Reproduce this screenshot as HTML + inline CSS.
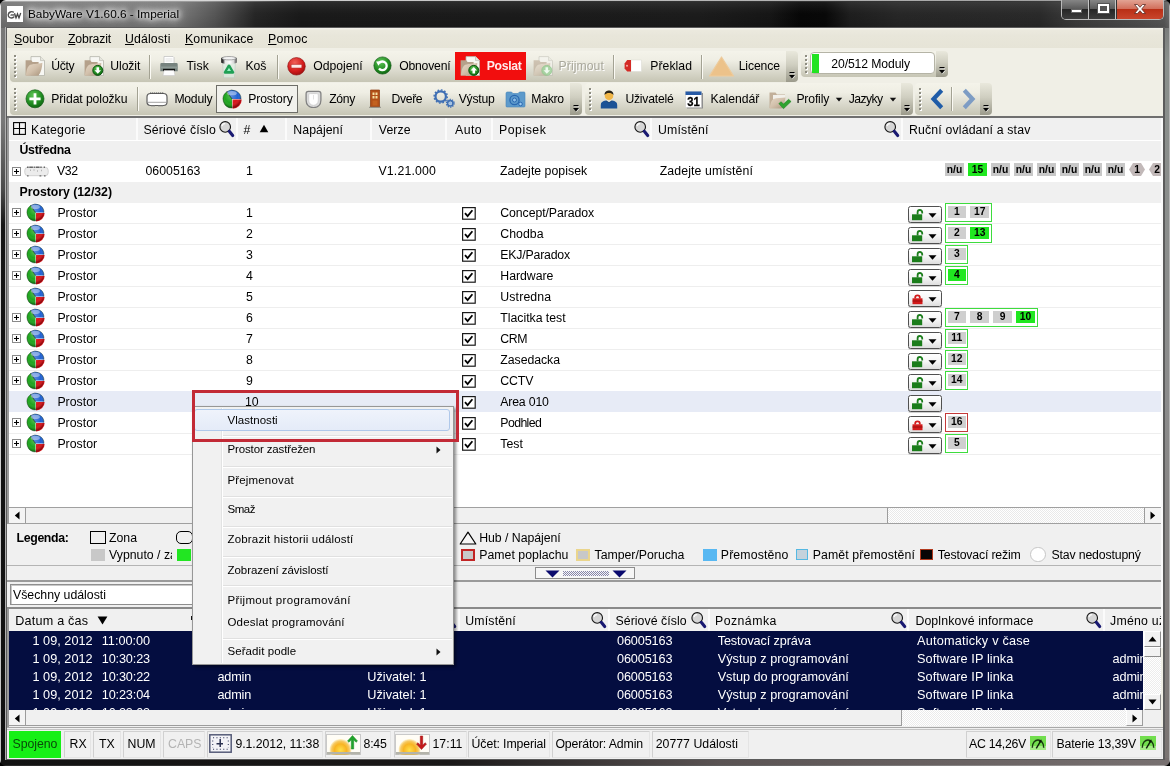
<!DOCTYPE html>
<html lang="cs">
<head>
<meta charset="utf-8">
<title>BabyWare V1.60.6 - Imperial</title>
<style>
*{box-sizing:border-box;margin:0;padding:0}
html,body{width:1170px;height:766px;overflow:hidden}
body{position:relative;background:#1c1c1c;font-family:"Liberation Sans",Arial,sans-serif;font-size:13px;color:#000;line-height:1}
.a{position:absolute;white-space:nowrap}
.t{position:absolute;white-space:nowrap;line-height:16px;height:16px}
.b{font-weight:bold}
u{text-decoration:underline}
</style>
</head>
<body>
<div class="a" style="left:0;top:0;width:1170px;height:766px;will-change:transform">
<!-- window frame -->
<div class="a" style="left:0;top:0;width:1170px;height:766px;background:#141414"></div>
<!-- left frame strip: gray near top fading to black -->
<div class="a" style="left:0;top:0;width:8px;height:766px;background:linear-gradient(180deg,#777 0,#787878 120px,#4a4a4a 190px,#151515 225px,#111 100%)"></div>
<!-- right frame strip -->
<div class="a" style="left:1162px;top:0;width:8px;height:766px;background:linear-gradient(180deg,#6c6c6c 0,#8a8f8c 60px,#8c8c8c 400px,#7a7472 100%)"></div>
<!-- bottom frame strip -->
<div class="a" style="left:0;top:758px;width:1170px;height:8px;background:linear-gradient(90deg,#121212 0,#1a1818 450px,#5a5353 720px,#777070 1170px)"></div>
<!-- title bar -->
<div class="a" style="left:0;top:0;width:1170px;height:28px;background:linear-gradient(90deg,#747474 0,#7c7c7c 40px,#7b7b7b 175px,#565656 215px,#262626 255px,#1a1a1a 300px,#1c1c1c 700px,#161616 770px,#070707 800px,#080808 825px,#1e1e1e 850px,#272727 900px,#2a2a2a 1040px,#3c3c3c 1075px,#585858 1164px,#6c6c6c 1170px)"></div>
<div class="a" style="left:0;top:0;width:1170px;height:28px;background:linear-gradient(180deg,rgba(255,255,255,.22) 0,rgba(255,255,255,.08) 2px,rgba(255,255,255,.03) 8px,rgba(0,0,0,0) 14px,rgba(0,0,0,.12) 28px)"></div>
<div class="a" style="left:0;top:0;width:1170px;height:1px;background:linear-gradient(90deg,#e8e8e8 0,#d0d0d0 300px,#9a9a9a 1170px)"></div>
<div class="a" style="left:0;top:1px;width:1170px;height:1px;background:linear-gradient(90deg,#a8a8a8 0,#9a9a9a 200px,#333 300px,#333 1000px,#555 1170px)"></div>
<div class="a" style="left:0;top:0;width:1px;height:766px;background:linear-gradient(180deg,#e8e8e8 0,#dcdcdc 200px,#c4c4c4 100%)"></div>
<div class="a" style="left:1169px;top:0;width:1px;height:766px;background:#b4b4b4"></div>
<div class="a" style="left:0;top:765px;width:1170px;height:1px;background:linear-gradient(90deg,#2a2a2a 0,#3a3a3a 500px,#a8a4a4 1170px)"></div>
<!-- corners -->
<svg class="a" style="left:0;top:0" width="6" height="6" viewBox="0 0 6 6"><path d="M0 0h6A6 6 0 0 0 0 6z" fill="#000"/></svg>
<svg class="a" style="left:1164px;top:0" width="6" height="6" viewBox="0 0 6 6"><path d="M6 0H0A6 6 0 0 1 6 6z" fill="#000"/></svg>
<svg class="a" style="left:0;top:760px" width="6" height="6" viewBox="0 0 6 6"><path d="M0 6h6A6 6 0 0 1 0 0z" fill="#000"/></svg>
<svg class="a" style="left:1164px;top:760px" width="6" height="6" viewBox="0 0 6 6"><path d="M6 6H0A6 6 0 0 0 6 0z" fill="#000"/></svg>
<!-- inner client border -->
<div class="a" style="left:5px;top:27px;width:1160px;height:733px;background:#5b5b5b;border-left:1px solid #b0b0b0"></div>
<div class="a" style="left:7px;top:28px;width:1156px;height:731px;background:#f0efe6"></div>
<!-- app icon -->
<div class="a" style="left:7px;top:6px;width:16px;height:16px;background:#fff"></div>
<svg class="a" style="left:7px;top:6.500px" width="16" height="16" viewBox="0 0 16 16"><path d="M6.800 5.300C4.600 3.900 1.400 5 1.200 7.900c-.2 2.700 2.900 3.800 5.400 2.500V8H4" fill="none" stroke="#505050" stroke-width="1.400"/><path d="M3 8.200h3.600v2" fill="none" stroke="#9a9a9a" stroke-width="1"/><path d="M7.500 6.300l1.500 4.600 1.500-4 1.500 4 1.700-4.900" fill="none" stroke="#444" stroke-width="1.300"/></svg>
<!-- title -->
<div class="a" style="left:28px;top:6px;font-size:11.800px;line-height:16px;color:#000;text-shadow:0 0 5px #fff,0 0 7px #fff,0 0 9px rgba(255,255,255,.95),0 0 12px rgba(255,255,255,.8)">BabyWare V1.60.6 - Imperial</div>
<!-- caption buttons -->
<div class="a" style="left:1061px;top:0;width:103px;height:20px;border:1px solid #b9b9b9;border-top:none;border-radius:0 0 5px 5px;background:#333;overflow:hidden">
 <div class="a" style="left:0;top:0;width:27px;height:19px;background:linear-gradient(180deg,#858585 0,#5c5c5c 45%,#262626 50%,#3e3e3e 100%);border-right:1px solid #c5c5c5"></div>
 <div class="a" style="left:28px;top:0;width:26px;height:19px;background:linear-gradient(180deg,#858585 0,#5c5c5c 45%,#262626 50%,#3e3e3e 100%);border-right:1px solid #c5c5c5"></div>
 <div class="a" style="left:55px;top:0;width:46px;height:19px;background:linear-gradient(180deg,#e2a393 0,#d2705c 45%,#b92f16 50%,#c9452c 100%)"></div>
 <div class="a" style="left:9px;top:9px;width:11px;height:4px;background:#fff;border:1px solid #666"></div>
 <div class="a" style="left:36px;top:4px;width:11px;height:9px;border:2px solid #fff;border-top-width:2.500px;outline:1px solid #555;background:#555"></div>
 <svg class="a" style="left:71px;top:3px" width="14" height="12" viewBox="0 0 14 12"><path d="M1.500 1.500h3L7 4.300 9.500 1.500h3L8.700 6l3.800 4.500h-3L7 7.700 4.500 10.500h-3L5.300 6z" fill="#fff" stroke="#5a2a22" stroke-width=".8"/></svg>
</div>
<!-- menu + toolbars -->
<div class="a" style="left:7px;top:28px;width:1156px;height:20px;background:linear-gradient(180deg,#f4f3ec 0,#ebe9de 12%,#e8e6da 40%,#e6e4d7 100%);"></div>
<div class="t" style="left:14px;top:30.5px;font-size:12.3px;letter-spacing:0.023px;"><u>S</u>oubor</div>
<div class="t" style="left:68px;top:30.5px;font-size:12.3px;letter-spacing:-0.179px;"><u>Z</u>obrazit</div>
<div class="t" style="left:125px;top:30.5px;font-size:12.3px;letter-spacing:0.133px;"><u>U</u>dálosti</div>
<div class="t" style="left:185px;top:30.5px;font-size:12.3px;letter-spacing:0.061px;"><u>K</u>omunikace</div>
<div class="t" style="left:268px;top:30.5px;font-size:12.3px;letter-spacing:0.284px;"><u>P</u>omoc</div>
<div class="a" style="left:10px;top:51px;width:778px;height:31px;background:linear-gradient(180deg,#f4f3ea 0,#efeee4 30%,#dddcd0 60%,#c6c5b4 100%);border-radius:4px 0 0 4px;"></div>
<div class="a" style="left:786px;top:51px;width:12px;height:31px;background:linear-gradient(180deg,#e9e8dc 0,#cfcec0 45%,#9b9a8b 100%);border-radius:0 4px 4px 0;"></div>
<svg class="a" style="left:788px;top:71px" width="8" height="9" viewBox="0 0 8 9"><path d="M2.100 2.600h5" stroke="#fff" stroke-width="1" opacity=".85"/><path d="M1.500 1.600h5" stroke="#000" stroke-width="1.200"/><path d="M1.600 4.600h6L4.600 8.100z" fill="#fff" opacity=".85"/><path d="M1 4h6L4 7.500z" fill="#000"/></svg>
<div class="a" style="left:15px;top:56px;width:2px;height:22px;background:repeating-linear-gradient(180deg,#fff 0,#fff 2px,transparent 2px,transparent 4px)"></div>
<div class="a" style="left:14px;top:55px;width:2px;height:22px;background:repeating-linear-gradient(180deg,#8e8d82 0,#8e8d82 2px,transparent 2px,transparent 4px)"></div>
<div class="a" style="left:801px;top:51px;width:137px;height:26px;background:linear-gradient(180deg,#f4f3ea 0,#efeee4 30%,#dddcd0 60%,#c6c5b4 100%);border-radius:4px 0 0 4px;"></div>
<div class="a" style="left:936px;top:51px;width:12px;height:26px;background:linear-gradient(180deg,#e9e8dc 0,#cfcec0 45%,#9b9a8b 100%);border-radius:0 4px 4px 0;"></div>
<svg class="a" style="left:938px;top:66px" width="8" height="9" viewBox="0 0 8 9"><path d="M2.100 2.600h5" stroke="#fff" stroke-width="1" opacity=".85"/><path d="M1.500 1.600h5" stroke="#000" stroke-width="1.200"/><path d="M1.600 4.600h6L4.600 8.100z" fill="#fff" opacity=".85"/><path d="M1 4h6L4 7.500z" fill="#000"/></svg>
<div class="a" style="left:806px;top:56px;width:2px;height:18px;background:repeating-linear-gradient(180deg,#fff 0,#fff 2px,transparent 2px,transparent 4px)"></div>
<div class="a" style="left:805px;top:55px;width:2px;height:18px;background:repeating-linear-gradient(180deg,#8e8d82 0,#8e8d82 2px,transparent 2px,transparent 4px)"></div>
<div class="a" style="left:10px;top:83px;width:562px;height:32px;background:linear-gradient(180deg,#f4f3ea 0,#efeee4 30%,#dddcd0 60%,#c6c5b4 100%);border-radius:4px 0 0 4px;"></div>
<div class="a" style="left:570px;top:83px;width:12px;height:32px;background:linear-gradient(180deg,#e9e8dc 0,#cfcec0 45%,#9b9a8b 100%);border-radius:0 4px 4px 0;"></div>
<svg class="a" style="left:572px;top:104px" width="8" height="9" viewBox="0 0 8 9"><path d="M2.100 2.600h5" stroke="#fff" stroke-width="1" opacity=".85"/><path d="M1.500 1.600h5" stroke="#000" stroke-width="1.200"/><path d="M1.600 4.600h6L4.600 8.100z" fill="#fff" opacity=".85"/><path d="M1 4h6L4 7.500z" fill="#000"/></svg>
<div class="a" style="left:15px;top:89px;width:2px;height:22px;background:repeating-linear-gradient(180deg,#fff 0,#fff 2px,transparent 2px,transparent 4px)"></div>
<div class="a" style="left:14px;top:88px;width:2px;height:22px;background:repeating-linear-gradient(180deg,#8e8d82 0,#8e8d82 2px,transparent 2px,transparent 4px)"></div>
<div class="a" style="left:585px;top:83px;width:318px;height:32px;background:linear-gradient(180deg,#f4f3ea 0,#efeee4 30%,#dddcd0 60%,#c6c5b4 100%);border-radius:4px 0 0 4px;"></div>
<div class="a" style="left:901px;top:83px;width:12px;height:32px;background:linear-gradient(180deg,#e9e8dc 0,#cfcec0 45%,#9b9a8b 100%);border-radius:0 4px 4px 0;"></div>
<svg class="a" style="left:903px;top:104px" width="8" height="9" viewBox="0 0 8 9"><path d="M2.100 2.600h5" stroke="#fff" stroke-width="1" opacity=".85"/><path d="M1.500 1.600h5" stroke="#000" stroke-width="1.200"/><path d="M1.600 4.600h6L4.600 8.100z" fill="#fff" opacity=".85"/><path d="M1 4h6L4 7.500z" fill="#000"/></svg>
<div class="a" style="left:590px;top:89px;width:2px;height:22px;background:repeating-linear-gradient(180deg,#fff 0,#fff 2px,transparent 2px,transparent 4px)"></div>
<div class="a" style="left:589px;top:88px;width:2px;height:22px;background:repeating-linear-gradient(180deg,#8e8d82 0,#8e8d82 2px,transparent 2px,transparent 4px)"></div>
<div class="a" style="left:915px;top:83px;width:67px;height:32px;background:linear-gradient(180deg,#f4f3ea 0,#efeee4 30%,#dddcd0 60%,#c6c5b4 100%);border-radius:4px 0 0 4px;"></div>
<div class="a" style="left:980px;top:83px;width:12px;height:32px;background:linear-gradient(180deg,#e9e8dc 0,#cfcec0 45%,#9b9a8b 100%);border-radius:0 4px 4px 0;"></div>
<svg class="a" style="left:982px;top:104px" width="8" height="9" viewBox="0 0 8 9"><path d="M2.100 2.600h5" stroke="#fff" stroke-width="1" opacity=".85"/><path d="M1.500 1.600h5" stroke="#000" stroke-width="1.200"/><path d="M1.600 4.600h6L4.600 8.100z" fill="#fff" opacity=".85"/><path d="M1 4h6L4 7.500z" fill="#000"/></svg>
<div class="a" style="left:920px;top:89px;width:2px;height:22px;background:repeating-linear-gradient(180deg,#fff 0,#fff 2px,transparent 2px,transparent 4px)"></div>
<div class="a" style="left:919px;top:88px;width:2px;height:22px;background:repeating-linear-gradient(180deg,#8e8d82 0,#8e8d82 2px,transparent 2px,transparent 4px)"></div>
<div class="t" style="left:51.3px;top:57.5px;font-size:12.2px;letter-spacing:-0.325px;">Účty</div>
<div class="t" style="left:110.3px;top:57.5px;font-size:12.2px;letter-spacing:-0.084px;">Uložit</div>
<div class="t" style="left:186.4px;top:57.5px;font-size:12.2px;letter-spacing:0.172px;">Tisk</div>
<div class="t" style="left:245.4px;top:57.5px;font-size:12.2px;letter-spacing:-0.074px;">Koš</div>
<div class="t" style="left:313.3px;top:57.5px;font-size:12.2px;letter-spacing:-0.002px;">Odpojení</div>
<div class="t" style="left:399.2px;top:57.5px;font-size:12.2px;letter-spacing:-0.201px;">Obnovení</div>
<div class="t" style="left:559.5px;top:58.5px;font-size:12.2px;color:#fff;letter-spacing:0.095px;">Přijmout</div>
<div class="t" style="left:558.5px;top:57.5px;font-size:12.2px;color:#a9a89c;letter-spacing:0.095px;">Přijmout</div>
<div class="t" style="left:650.3px;top:57.5px;font-size:12.2px;letter-spacing:0.048px;">Překlad</div>
<div class="t" style="left:738.7px;top:57.5px;font-size:12.2px;letter-spacing:-0.107px;">Licence</div>
<div class="a" style="left:455px;top:52px;width:71px;height:28px;background:#f20e0e;"></div>
<div class="t" style="left:486.7px;top:57.5px;font-size:12.2px;color:#ffecec;font-weight:bold;letter-spacing:-0.269px;">Poslat</div>
<div class="a" style="left:149px;top:55px;width:1px;height:24px;background:#a3a293;"></div>
<div class="a" style="left:150px;top:55px;width:1px;height:24px;background:#fbfaf4;"></div>
<div class="a" style="left:277px;top:55px;width:1px;height:24px;background:#a3a293;"></div>
<div class="a" style="left:278px;top:55px;width:1px;height:24px;background:#fbfaf4;"></div>
<div class="a" style="left:613px;top:55px;width:1px;height:24px;background:#a3a293;"></div>
<div class="a" style="left:614px;top:55px;width:1px;height:24px;background:#fbfaf4;"></div>
<div class="a" style="left:701px;top:55px;width:1px;height:24px;background:#a3a293;"></div>
<div class="a" style="left:702px;top:55px;width:1px;height:24px;background:#fbfaf4;"></div>
<div class="a" style="left:810px;top:52px;width:125px;height:22px;background:#fff;border:1px solid #b5b4a6;border-radius:4px;"></div>
<div class="a" style="left:812px;top:54px;width:7px;height:19px;background:#22e322;"></div>
<div class="t" style="left:831.3px;top:56px;font-size:12.2px;letter-spacing:-0.103px;">20/512 Moduly</div>
<div class="a" style="left:216px;top:85px;width:82px;height:28px;background:#f1f1ec;border:1px solid #6e6e68;"></div>
<div class="t" style="left:51.3px;top:91px;font-size:12.2px;letter-spacing:-0.086px;">Přidat položku</div>
<div class="t" style="left:174.4px;top:91px;font-size:12.2px;letter-spacing:-0.238px;">Moduly</div>
<div class="t" style="left:248.2px;top:91px;font-size:12.2px;letter-spacing:-0.103px;">Prostory</div>
<div class="t" style="left:329.2px;top:91px;font-size:12.2px;letter-spacing:-0.306px;">Zóny</div>
<div class="t" style="left:391.5px;top:91px;font-size:12.2px;letter-spacing:-0.349px;">Dveře</div>
<div class="t" style="left:458.7px;top:91px;font-size:12.2px;letter-spacing:-0.233px;">Výstup</div>
<div class="t" style="left:531.3px;top:91px;font-size:12.2px;letter-spacing:-0.279px;">Makro</div>
<div class="t" style="left:625.4px;top:91px;font-size:12.2px;letter-spacing:-0.220px;">Uživatelé</div>
<div class="t" style="left:710.5px;top:91px;font-size:12.2px;letter-spacing:0.020px;">Kalendář</div>
<div class="t" style="left:796.4px;top:91px;font-size:12.2px;letter-spacing:-0.157px;">Profily</div>
<div class="t" style="left:848.7px;top:91px;font-size:12.2px;letter-spacing:-0.564px;">Jazyky</div>
<div class="a" style="left:137px;top:87px;width:1px;height:24px;background:#a3a293;"></div>
<div class="a" style="left:138px;top:87px;width:1px;height:24px;background:#fbfaf4;"></div>
<!-- toolbar icons -->
<svg class="a" width="0" height="0" style="left:0;top:0"><defs>
<linearGradient id="gFold" x1="0" y1="0" x2="1" y2="1"><stop offset="0" stop-color="#e6d8c6"/><stop offset=".5" stop-color="#d2c0ab"/><stop offset="1" stop-color="#a8937b"/></linearGradient>
<radialGradient id="gGreen" cx=".4" cy=".3" r=".8"><stop offset="0" stop-color="#5fc457"/><stop offset=".6" stop-color="#1f8a1f"/><stop offset="1" stop-color="#0d5a10"/></radialGradient>
<radialGradient id="gRed" cx=".4" cy=".3" r=".8"><stop offset="0" stop-color="#f0605a"/><stop offset=".6" stop-color="#d31a1a"/><stop offset="1" stop-color="#8e0c0c"/></radialGradient>
<radialGradient id="gBlue" cx=".5" cy=".2" r=".9"><stop offset="0" stop-color="#7fb4f0"/><stop offset=".6" stop-color="#2a63c0"/><stop offset="1" stop-color="#173f8a"/></radialGradient>
<radialGradient id="gGrn2" cx=".3" cy=".3" r=".9"><stop offset="0" stop-color="#6cd060"/><stop offset=".6" stop-color="#249a22"/><stop offset="1" stop-color="#126a14"/></radialGradient>
<radialGradient id="gRed2" cx=".5" cy=".3" r=".9"><stop offset="0" stop-color="#f06a5a"/><stop offset=".7" stop-color="#d02018"/><stop offset="1" stop-color="#9a1410"/></radialGradient>
<radialGradient id="gSph" cx=".45" cy=".35" r=".65"><stop offset="0" stop-color="#fff" stop-opacity=".25"/><stop offset=".55" stop-color="#fff" stop-opacity="0"/><stop offset=".85" stop-color="#000" stop-opacity=".18"/><stop offset="1" stop-color="#000" stop-opacity=".5"/></radialGradient>
</defs></svg>
<svg class="a" style="left:25px;top:56px;" width="20" height="20" viewBox="0 0 20 20"><g opacity="1"><path d="M6 .6h9.500l4 4v14.900H6z" fill="#f7f7f3" stroke="#b4b4aa" stroke-width=".8"/><path d="M15.500 .6v4h4" fill="#e6e6de" stroke="#b4b4aa" stroke-width=".6"/><path d="M.6 4.200h5.600l1.400 1.800h6v13.500H.6z" fill="#b5a18b"/><path d="M.8 19.500C1.400 15 2 11.200 4.200 9.400c2.700-2.100 8.600-1 13.200-2.700-.3 5.200-1.400 9.700-4 12.800z" fill="url(#gFold)"/></g></svg>
<svg class="a" style="left:84px;top:56px;" width="20" height="20" viewBox="0 0 20 20"><g opacity="1"><path d="M6 .6h9.500l4 4v14.900H6z" fill="#f7f7f3" stroke="#b4b4aa" stroke-width=".8"/><path d="M15.500 .6v4h4" fill="#e6e6de" stroke="#b4b4aa" stroke-width=".6"/><path d="M.6 4.200h5.600l1.400 1.800h6v13.500H.6z" fill="#b5a18b"/><path d="M.8 19.500C1.400 15 2 11.200 4.200 9.400c2.700-2.100 8.600-1 13.200-2.700-.3 5.200-1.400 9.700-4 12.800z" fill="url(#gFold)"/></g><circle cx="13.800" cy="14.400" r="5" fill="url(#gGreen)" stroke="#0c5210" stroke-width="1"/><path d="M12.500 11.300h2.600v3h2l-3.300 3.500-3.300-3.500h2z" fill="#fff"/></svg>
<svg class="a" style="left:160px;top:56px;" width="18" height="20" viewBox="0 0 18 20"><path d="M4 .5h9l1 1v6H4z" fill="#fff" stroke="#bdbdbd" stroke-width=".7"/><path d="M5.500 3h7M5.500 5h7" stroke="#d5d5d5" stroke-width=".7"/><path d="M1.500 7h15a1.200 1.200 0 0 1 1.200 1.200v7H.3v-7A1.200 1.200 0 0 1 1.500 7z" fill="#77837f"/><path d="M.3 10.500h17.400v2H.3z" fill="#8f9b97"/><path d="M3 12.800h12v2.400H3z" fill="#111"/><path d="M4 14.500h10l1 5H3z" fill="#fdfdfd" stroke="#c8c8c8" stroke-width=".6"/></svg>
<svg class="a" style="left:220px;top:55px;" width="18" height="24" viewBox="0 0 18 24"><defs><linearGradient id="gRim" x1="0" x2="1"><stop offset="0" stop-color="#111"/><stop offset=".13" stop-color="#444"/><stop offset=".25" stop-color="#e6e6e6"/><stop offset=".55" stop-color="#fdfdfd"/><stop offset=".8" stop-color="#d8d8d8"/><stop offset=".93" stop-color="#777"/><stop offset="1" stop-color="#555"/></linearGradient></defs><path d="M2.600 7.500h12.800l-1 15.200H3.600z" fill="#dff0e6" fill-opacity=".65" stroke="#b9c6be" stroke-opacity=".7" stroke-width=".7"/><path d="M1.200 3.200C1.200 .8 16.800 .8 16.800 3.200v4C16.800 9.400 1.200 9.400 1.200 7.200z" fill="url(#gRim)"/><ellipse cx="9" cy="3.200" rx="7" ry="1.700" fill="#f2f2f2" stroke="#8a8a8a" stroke-width=".7"/><path d="M9 10.800l3.900 6.600H5.100z" fill="#b6f0cf" stroke="#1fa055" stroke-width="2.700" stroke-linejoin="round"/><path d="M9 12.800l1.900 3.300H7.100z" fill="#9af0c4"/></svg>
<svg class="a" style="left:287px;top:57px;" width="19" height="19" viewBox="0 0 19 19"><circle cx="9.500" cy="9.300" r="8.800" fill="url(#gRed)" stroke="#8a1010" stroke-width=".6"/><rect x="4.200" y="7.400" width="10.600" height="3.600" rx=".8" fill="#fde8e8" stroke="#a82020" stroke-width=".5"/></svg>
<svg class="a" style="left:373px;top:56px;" width="19" height="19" viewBox="0 0 19 19"><circle cx="9.500" cy="9.500" r="8.600" fill="url(#gGreen)" stroke="#0f5a12" stroke-width=".7"/><path d="M6 12.500a4.300 4.300 0 1 0 .2-5.600" fill="none" stroke="#fff" stroke-width="2.300"/><path d="M3.300 5.200l5.200 .3-3.400 4.200z" fill="#fff" transform="rotate(-8 6 7)"/></svg>
<svg class="a" style="left:460px;top:55.5px;" width="20" height="20" viewBox="0 0 20 20"><g opacity="1"><path d="M6 .6h9.500l4 4v14.900H6z" fill="#f7f7f3" stroke="#b4b4aa" stroke-width=".8"/><path d="M15.500 .6v4h4" fill="#e6e6de" stroke="#b4b4aa" stroke-width=".6"/><path d="M.6 4.200h5.600l1.400 1.800h6v13.500H.6z" fill="#b5a18b"/><path d="M.8 19.500C1.400 15 2 11.200 4.200 9.400c2.700-2.100 8.600-1 13.200-2.700-.3 5.200-1.400 9.700-4 12.800z" fill="url(#gFold)"/></g><circle cx="13.800" cy="14.400" r="5" fill="url(#gGreen)" stroke="#0c5210" stroke-width="1"/><path d="M12.500 17.600h2.600v-3h2l-3.300-3.500-3.300 3.500h2z" fill="#fff"/></svg>
<svg class="a" style="left:533px;top:56px;" width="20" height="20" viewBox="0 0 20 20"><g opacity="0.55"><path d="M6 .6h9.500l4 4v14.900H6z" fill="#f7f7f3" stroke="#b4b4aa" stroke-width=".8"/><path d="M15.500 .6v4h4" fill="#e6e6de" stroke="#b4b4aa" stroke-width=".6"/><path d="M.6 4.200h5.600l1.400 1.800h6v13.500H.6z" fill="#b5a18b"/><path d="M.8 19.500C1.400 15 2 11.200 4.200 9.400c2.700-2.100 8.600-1 13.200-2.700-.3 5.200-1.400 9.700-4 12.800z" fill="url(#gFold)"/></g><circle cx="13.800" cy="14.400" r="5" fill="#a4d4a0" stroke="#8fc48c" stroke-width=".8" opacity=".9"/><path d="M12.500 11.300h2.600v3h2l-3.300 3.500-3.300-3.500h2z" fill="#eefaee"/></svg>
<svg class="a" style="left:624px;top:59px;" width="19" height="14" viewBox="0 0 19 14"><path d="M7 1h10.500v11.500H7z" fill="#fff" stroke="#d8d8d0" stroke-width=".5"/><path d="M7 1v11.500H3.200L.6 9.500v-5L3.200 1z" fill="#d42a25"/><circle cx="3" cy="6.800" r="1" fill="#f4b0a8"/></svg>
<svg class="a" style="left:708px;top:55px;" width="27" height="22" viewBox="0 0 27 22"><path d="M13.500 2L25.500 21H1.500z" fill="#ecc28a" stroke="#edcb9c" stroke-width="1.200" stroke-linejoin="round"/></svg>
<svg class="a" style="left:25px;top:89px;" width="20" height="20" viewBox="0 0 20 20"><circle cx="10" cy="9.800" r="9" fill="url(#gGreen)" stroke="#0f5a12" stroke-width=".7"/><path d="M8.600 4.200h2.800v4.200h4.200v2.800h-4.200v4.200H8.600v-4.200H4.400V8.400h4.200z" fill="#fff"/></svg>
<svg class="a" style="left:146px;top:91px;" width="22" height="16" viewBox="0 0 22 16"><rect x="1" y="2.500" width="20" height="12" rx="3.500" fill="#fff" stroke="#606060" stroke-width="1.200"/><path d="M4 2.200h14" stroke="#555" stroke-width="1.600" stroke-dasharray="1.300 .7"/><path d="M2 11.300h18" stroke="#8a8a8a" stroke-width=".8"/><path d="M5 14.800h4M12 14.800h5" stroke="#777" stroke-width="1"/></svg>
<svg class="a" style="left:222px;top:89px;" width="21.2" height="21.2" viewBox="0 0 20 20"><path d="M9.500 9.500L4.620 2.540A8.500 8.500 0 0 0 9.500 18z" fill="#1fa51f"/><path d="M9.500 9.500L4.620 2.540A8.500 8.500 0 0 1 18 9.500z" fill="#2263d2"/><path d="M10 10h8.600A8.500 8.500 0 0 1 10 18.600z" fill="#d8141a"/><circle cx="9.500" cy="9.500" r="8.500" fill="url(#gSph)"/><path d="M9.500 9.500L4.620 2.540A8.500 8.500 0 0 0 9.500 18M9.500 9.500L4.620 2.540A8.500 8.500 0 0 1 18 9.500" fill="none" stroke="#0c2a10" stroke-width=".7" stroke-opacity=".55"/><ellipse cx="9.300" cy="3.900" rx="4.600" ry="2.100" fill="#fff" fill-opacity=".42"/></svg>
<svg class="a" style="left:304.5px;top:89.5px;" width="17" height="18.5" viewBox="0 0 17 18.500"><path d="M3.300 1.300h10.400c1.500 0 2.200 1 2.200 2.500v6.400c0 4.500-3 7.400-7.400 7.400S1.100 14.700 1.100 10.200V3.800c0-1.500 .7-2.500 2.200-2.500z" fill="#dcdcdc" stroke="#828282" stroke-width="1.300"/><path d="M5.300 3.600h6.400c1 0 1.600 .6 1.600 1.600v4.900c0 3.300-2 5.200-4.800 5.200s-4.800-1.900-4.800-5.200V5.200c0-1 .6-1.600 1.600-1.600z" fill="#fefefe" stroke="#c8c8c8" stroke-width=".7"/><path d="M8.500 5v4.500" stroke="#e2e2e2" stroke-width="1"/></svg>
<svg class="a" style="left:369px;top:89px;" width="12" height="20" viewBox="0 0 12 20"><path d="M1.500 1h9v17h-9z" fill="#b24f16" stroke="#8a3a0c" stroke-width=".7"/><path d="M3.500 3.500h2v2.500h-2zM6.500 3.500h2v2.500h-2zM3.500 7h2v2.500h-2zM6.500 7h2v2.500h-2z" fill="#f6dfa0"/><path d="M3.500 11.500h5v5h-5z" fill="#c2611f"/><path d="M0 18.300h12" stroke="#8f8f88" stroke-width="1"/></svg>
<svg class="a" style="left:433px;top:89px;" width="24" height="20" viewBox="0 0 24 20"><circle cx="7.700" cy="7.500" r="5.200" fill="none" stroke="#3f6fb4" stroke-width="2.200"/><circle cx="7.700" cy="7.500" r="6.600" fill="none" stroke="#3f6fb4" stroke-width="1.400" stroke-dasharray="1.700 1.750"/><circle cx="17.300" cy="14.300" r="2.700" fill="none" stroke="#3f6fb4" stroke-width="1.700"/><circle cx="17.300" cy="14.300" r="3.900" fill="none" stroke="#3f6fb4" stroke-width="1.200" stroke-dasharray="1.300 1.150"/><circle cx="17.300" cy="14.300" r="1.500" fill="#9cc0ea"/></svg>
<svg class="a" style="left:505px;top:90px;" width="21" height="18" viewBox="0 0 21 18"><path d="M1 3.500c0-1 .5-1.500 1.500-1.500h4l1.500 1.500H13l1.500-1.500H19c.8 0 1 .5 1 1.500v12.500c0 .8-.4 1-1 1H2c-.7 0-1-.3-1-1z" fill="#5d9acb" stroke="#4684b8" stroke-width=".6"/><circle cx="9.500" cy="10" r="4.600" fill="none" stroke="#2a68b0" stroke-width="1.300"/><circle cx="9.500" cy="10" r="2" fill="#8fc0ea" stroke="#2a68b0" stroke-width="1"/><circle cx="15.500" cy="14" r="1.800" fill="#9ccaf0" stroke="#2a68b0" stroke-width="1"/></svg>
<svg class="a" style="left:600px;top:90px;" width="18" height="19" viewBox="0 0 18 19"><circle cx="9" cy="5.700" r="4.300" fill="#f0b648"/><path d="M4.500 5C4.500 1.600 7 .5 9 .5s4.500 1.100 4.500 4.500c-1.500-1.400-2.600-2-4.500-2s-3 .6-4.500 2z" fill="#2a2418"/><path d="M.8 18.500v-3.600c0-2.600 2-3.700 4.900-4.300l3.300 2 3.300-2c2.900 .6 4.900 1.700 4.900 4.300v3.600z" fill="#1b5296"/><path d="M6 10.800l3 1.900 3-1.900" fill="none" stroke="#0e3a70" stroke-width=".8"/></svg>
<svg class="a" style="left:685px;top:91px;" width="19" height="18" viewBox="0 0 19 18"><path d="M2 2h16v15.500H2z" fill="#8e8e8e"/><path d="M.5 .5h16v16H.5z" fill="#fff" stroke="#c0c0c0" stroke-width=".5"/><path d="M.5 .5h16V4H.5z" fill="#275aa5"/><text x="8.500" y="15.300" font-family="Liberation Sans,sans-serif" font-weight="bold" font-size="13.500" text-anchor="middle" fill="#000" stroke="#000" stroke-width=".3" textLength="12.500" lengthAdjust="spacingAndGlyphs">31</text></svg>
<svg class="a" style="left:769px;top:90px;" width="23" height="20" viewBox="0 0 23 20"><path d="M.5 2.500h6l1.500 2h8v13.500H.5z" fill="#c2b09a"/><path d="M4 5h12v12H4z" fill="#f2f0ea"/><path d="M.5 18.500c1-4 1.500-8 4-9.500 3-1.500 8-.8 12-1.500-.5 4-1.500 8-4 11z" fill="url(#gFold)"/><path d="M9.800 13.600l2.400-1.900 2.200 2.400 5.200-4.800 2.500 2.200-7.700 7.300z" fill="#2fa32f" stroke="#1c7a20" stroke-width=".5"/></svg>
<svg class="a" style="left:835px;top:97px;" width="8" height="5" viewBox="0 0 8 5"><path d="M.8 .8h6.400L4 4.400z" fill="#111"/></svg>
<svg class="a" style="left:888.5px;top:97px;" width="8" height="5" viewBox="0 0 8 5"><path d="M.8 .8h6.400L4 4.400z" fill="#111"/></svg>
<svg class="a" style="left:930px;top:88px;" width="15" height="22" viewBox="0 0 15 22"><path d="M11.700 2.300L3.500 11l8.200 8.700" fill="none" stroke="#1f5ca8" stroke-width="4.200" stroke-linejoin="miter"/></svg>
<svg class="a" style="left:961px;top:88px;" width="15" height="22" viewBox="0 0 15 22"><path d="M3.300 2.300L11.500 11l-8.200 8.700" fill="none" stroke="#7d9cc4" stroke-width="4.200" stroke-linejoin="miter"/></svg>
<div class="a" style="left:951px;top:87px;width:1px;height:24px;background:#a3a293"></div><div class="a" style="left:952px;top:87px;width:1px;height:24px;background:#fbfaf4"></div>
<!-- main table -->
<div class="a" style="left:7px;top:116px;width:1156px;height:2px;background:#6f6f6f;"></div>
<div class="a" style="left:7px;top:118px;width:2px;height:406px;background:#9a9a9a;"></div>
<div class="a" style="left:9px;top:118px;width:1152px;height:406px;background:#fff;"></div>
<div class="a" style="left:1161px;top:118px;width:2px;height:530px;background:#fafafa;"></div>
<div class="a" style="left:9px;top:118px;width:1152px;height:22px;background:#f0f0f0;"></div>
<div class="a" style="left:9px;top:140px;width:1152px;height:1px;background:#fff;"></div>
<div class="a" style="left:135.5px;top:118px;width:2px;height:22px;background:#fbfbfb;"></div>
<div class="a" style="left:236px;top:118px;width:2px;height:22px;background:#fbfbfb;"></div>
<div class="a" style="left:285px;top:118px;width:2px;height:22px;background:#fbfbfb;"></div>
<div class="a" style="left:370px;top:118px;width:2px;height:22px;background:#fbfbfb;"></div>
<div class="a" style="left:445px;top:118px;width:2px;height:22px;background:#fbfbfb;"></div>
<div class="a" style="left:491px;top:118px;width:2px;height:22px;background:#fbfbfb;"></div>
<div class="a" style="left:650px;top:118px;width:2px;height:22px;background:#fbfbfb;"></div>
<div class="a" style="left:901px;top:118px;width:2px;height:22px;background:#fbfbfb;"></div>
<svg class="a" style="left:13px;top:122px;" width="13" height="13" viewBox="0 0 13 13"><rect x=".6" y=".6" width="11.800" height="11.800" fill="#f4f4f4" stroke="#000" stroke-width="1.100"/><path d="M1 6.500h11M6.500 1v11" stroke="#000" stroke-width="1.100"/></svg>
<div class="t" style="left:31px;top:121.6px;font-size:12.3px;letter-spacing:0.205px;">Kategorie</div>
<div class="t" style="left:143.5px;top:121.6px;font-size:12.3px;letter-spacing:0.161px;">Sériové číslo</div>
<svg class="a" style="left:219px;top:121px;" width="16" height="17" viewBox="0 0 16 17"><circle cx="6.200" cy="5.900" r="5.300" fill="#d6d6d6" stroke="#151515" stroke-width="1.100"/><path d="M3 5.200a3.400 3.400 0 0 1 3.200-2.700" fill="none" stroke="#fff" stroke-width="1.300" stroke-opacity=".85"/><path d="M10.300 10.300l3.400 4.200" stroke="#1a1a72" stroke-width="3.100" stroke-linecap="round"/></svg>
<div class="t" style="left:243.4px;top:121.6px;font-size:12.3px;">#</div>
<svg class="a" style="left:259px;top:124px;" width="10" height="9" viewBox="0 0 10 9"><path d="M5 .8L9.300 8.300H.7z" fill="#000"/></svg>
<div class="t" style="left:293.3px;top:121.6px;font-size:12.3px;letter-spacing:0.058px;">Napájení</div>
<div class="t" style="left:378.8px;top:121.6px;font-size:12.3px;letter-spacing:0.069px;">Verze</div>
<div class="t" style="left:455px;top:121.6px;font-size:12.3px;letter-spacing:0.424px;">Auto</div>
<div class="t" style="left:499px;top:121.6px;font-size:12.3px;letter-spacing:0.506px;">Popisek</div>
<svg class="a" style="left:634px;top:121px;" width="16" height="17" viewBox="0 0 16 17"><circle cx="6.200" cy="5.900" r="5.300" fill="#d6d6d6" stroke="#151515" stroke-width="1.100"/><path d="M3 5.200a3.400 3.400 0 0 1 3.200-2.700" fill="none" stroke="#fff" stroke-width="1.300" stroke-opacity=".85"/><path d="M10.300 10.300l3.400 4.200" stroke="#1a1a72" stroke-width="3.100" stroke-linecap="round"/></svg>
<div class="t" style="left:658px;top:121.6px;font-size:12.3px;letter-spacing:0.186px;">Umístění</div>
<svg class="a" style="left:884px;top:121px;" width="16" height="17" viewBox="0 0 16 17"><circle cx="6.200" cy="5.900" r="5.300" fill="#d6d6d6" stroke="#151515" stroke-width="1.100"/><path d="M3 5.200a3.400 3.400 0 0 1 3.200-2.700" fill="none" stroke="#fff" stroke-width="1.300" stroke-opacity=".85"/><path d="M10.300 10.300l3.400 4.200" stroke="#1a1a72" stroke-width="3.100" stroke-linecap="round"/></svg>
<div class="t" style="left:909px;top:121.6px;font-size:12.3px;letter-spacing:0.153px;">Ruční ovládaní a stav</div>
<div class="a" style="left:9px;top:141px;width:1152px;height:20px;background:#f0f0f0;"></div>
<div class="t" style="left:19.5px;top:141.8px;font-size:12.3px;font-weight:bold;letter-spacing:-0.277px;">Ústředna</div>
<div class="a" style="left:9px;top:182px;width:1152px;height:21px;background:#f0f0f0;"></div>
<div class="t" style="left:19.5px;top:183.5px;font-size:12.3px;font-weight:bold;letter-spacing:-0.029px;">Prostory (12/32)</div>
<svg class="a" style="left:12px;top:167px;" width="9" height="9" viewBox="0 0 9 9"><rect x=".5" y=".5" width="8" height="8" fill="#fff" stroke="#8a8a8a"/><path d="M2 4.5h5M4.5 2v5" stroke="#000" stroke-width="1.100"/></svg>
<svg class="a" style="left:23.5px;top:165.5px;" width="25" height="11" viewBox="0 0 25 11"><rect x=".8" y="1.300" width="23.400" height="8.400" rx="3" fill="#ececec" stroke="#d2d2d2" stroke-width="1"/><path d="M3 1.200h18" stroke="#4a4a4a" stroke-opacity=".8" stroke-width="1.400" stroke-dasharray="1.600 .7 3.600 .8 1.200 .8 3.800 .8 1.400 2"/><path d="M3 9.800h1.600M15.500 9.800h1.800M20 9.800h1.600" stroke="#4a4a4a" stroke-opacity=".75" stroke-width="1.300"/><path d="M6 4.300h1M9.500 4h1M13 5h1M17 4.500h1" stroke="#b4b4b4" stroke-width="1.400"/></svg>
<div class="t" style="left:57px;top:162.5px;font-size:12.3px;letter-spacing:-0.395px;">V32</div>
<div class="t" style="left:145.4px;top:162.5px;font-size:12.3px;letter-spacing:0.047px;">06005163</div>
<div class="t" style="left:246px;top:162.5px;font-size:12.3px;">1</div>
<div class="t" style="left:378.5px;top:162.5px;font-size:12.3px;letter-spacing:0.157px;">V1.21.000</div>
<div class="t" style="left:500px;top:162.5px;font-size:12.3px;letter-spacing:0.024px;">Zadejte popisek</div>
<div class="t" style="left:659.7px;top:162.5px;font-size:12.3px;letter-spacing:0.105px;">Zadejte umístění</div>
<div class="a b" style="left:945px;top:163px;width:19px;height:13px;background:#c8c8c8;font-size:10.3px;line-height:13px;text-align:center">n/u</div>
<div class="a b" style="left:968px;top:163px;width:19px;height:13px;background:#20e820;font-size:10.3px;line-height:13px;text-align:center">15</div>
<div class="a b" style="left:991px;top:163px;width:19px;height:13px;background:#c8c8c8;font-size:10.3px;line-height:13px;text-align:center">n/u</div>
<div class="a b" style="left:1014px;top:163px;width:19px;height:13px;background:#c8c8c8;font-size:10.3px;line-height:13px;text-align:center">n/u</div>
<div class="a b" style="left:1037px;top:163px;width:19px;height:13px;background:#c8c8c8;font-size:10.3px;line-height:13px;text-align:center">n/u</div>
<div class="a b" style="left:1060px;top:163px;width:19px;height:13px;background:#c8c8c8;font-size:10.3px;line-height:13px;text-align:center">n/u</div>
<div class="a b" style="left:1083px;top:163px;width:19px;height:13px;background:#c8c8c8;font-size:10.3px;line-height:13px;text-align:center">n/u</div>
<div class="a b" style="left:1106px;top:163px;width:19px;height:13px;background:#c8c8c8;font-size:10.3px;line-height:13px;text-align:center">n/u</div>
<svg class="a" style="left:1129px;top:163px;" width="16" height="13" viewBox="0 0 16 13"><path d="M4 0h8l4 6.500-4 6.500H4L0 6.500z" fill="#c2b9b9"/></svg>
<div class="a b" style="left:1129px;top:163px;width:16px;height:13px;font-size:10.3px;line-height:13px;text-align:center">1</div>
<div class="a" style="left:1149px;top:163px;width:12px;height:13px;overflow:hidden"><svg class="a" style="left:0;top:0" width="16" height="13" viewBox="0 0 16 13"><path d="M4 0h8l4 6.500-4 6.500H4L0 6.500z" fill="#c2b9b9"/></svg><div class="a b" style="left:0;top:0;width:16px;height:13px;font-size:10.3px;line-height:13px;text-align:center">2</div></div>
<div class="a" style="left:9px;top:223px;width:1152px;height:1px;background:#eeeeee;"></div>
<svg class="a" style="left:12px;top:208px;" width="9" height="9" viewBox="0 0 9 9"><rect x=".5" y=".5" width="8" height="8" fill="#fff" stroke="#8a8a8a"/><path d="M2 4.5h5M4.5 2v5" stroke="#000" stroke-width="1.100"/></svg>
<svg class="a" style="left:26px;top:203px;" width="20" height="20" viewBox="0 0 20 20"><path d="M9.500 9.500L4.620 2.540A8.500 8.500 0 0 0 9.500 18z" fill="#1fa51f"/><path d="M9.500 9.500L4.620 2.540A8.500 8.500 0 0 1 18 9.500z" fill="#2263d2"/><path d="M10 10h8.600A8.500 8.500 0 0 1 10 18.600z" fill="#d8141a"/><circle cx="9.500" cy="9.500" r="8.500" fill="url(#gSph)"/><path d="M9.500 9.500L4.620 2.540A8.500 8.500 0 0 0 9.500 18M9.500 9.500L4.620 2.540A8.500 8.500 0 0 1 18 9.500" fill="none" stroke="#0c2a10" stroke-width=".7" stroke-opacity=".55"/><ellipse cx="9.300" cy="3.900" rx="4.600" ry="2.100" fill="#fff" fill-opacity=".42"/></svg>
<div class="t" style="left:57.4px;top:204.7px;font-size:12.3px;letter-spacing:0.008px;">Prostor</div>
<div class="t" style="left:246px;top:204.7px;font-size:12.3px;">1</div>
<svg class="a" style="left:462px;top:207px;" width="14" height="13" viewBox="0 0 14 13"><rect x=".6" y=".6" width="12.600" height="11.600" fill="#fff" stroke="#1a1a1a" stroke-width="1.200"/><path d="M3 6.200l2.600 2.900 4.800-5.800" fill="none" stroke="#000" stroke-width="1.800"/></svg>
<div class="t" style="left:500.3px;top:204.7px;font-size:12.3px;letter-spacing:-0.090px;">Concept/Paradox</div>
<div class="a" style="left:908px;top:205.5px;width:34px;height:17px;border:1px solid #505050;border-radius:2.500px;background:linear-gradient(180deg,#fff 0,#f6f6f6 50%,#dedede 100%);box-shadow:0 1px 0 #cfcfcf"></div>
<svg class="a" style="left:911px;top:207.5px;" width="14" height="13" viewBox="0 0 14 13"><path d="M1 6.300h10.200v5.900H1z" fill="#1b7d1b"/><path d="M6.600 6.500V4.300a2.300 2.300 0 0 1 4.600 0v1.300" fill="none" stroke="#1b7d1b" stroke-width="1.800"/></svg>
<svg class="a" style="left:927.5px;top:212.5px;" width="9" height="5" viewBox="0 0 9 5"><path d="M.5 .3h8L4.500 4.800z" fill="#000"/></svg>
<div class="a" style="left:945px;top:203px;width:47px;height:19px;border:1px solid #3edc3e;background:#fff"></div>
<div class="a b" style="left:947.5px;top:205.5px;width:18.5px;height:12.5px;background:#cfcfcf;font-size:10.3px;line-height:12.5px;text-align:center">1</div>
<div class="a b" style="left:970.4px;top:205.5px;width:18.5px;height:12.5px;background:#cfcfcf;font-size:10.3px;line-height:12.5px;text-align:center">17</div>
<div class="a" style="left:9px;top:244px;width:1152px;height:1px;background:#eeeeee;"></div>
<svg class="a" style="left:12px;top:229px;" width="9" height="9" viewBox="0 0 9 9"><rect x=".5" y=".5" width="8" height="8" fill="#fff" stroke="#8a8a8a"/><path d="M2 4.5h5M4.5 2v5" stroke="#000" stroke-width="1.100"/></svg>
<svg class="a" style="left:26px;top:224px;" width="20" height="20" viewBox="0 0 20 20"><path d="M9.500 9.500L4.620 2.540A8.500 8.500 0 0 0 9.500 18z" fill="#1fa51f"/><path d="M9.500 9.500L4.620 2.540A8.500 8.500 0 0 1 18 9.500z" fill="#2263d2"/><path d="M10 10h8.600A8.500 8.500 0 0 1 10 18.600z" fill="#d8141a"/><circle cx="9.500" cy="9.500" r="8.500" fill="url(#gSph)"/><path d="M9.500 9.500L4.620 2.540A8.500 8.500 0 0 0 9.500 18M9.500 9.500L4.620 2.540A8.500 8.500 0 0 1 18 9.500" fill="none" stroke="#0c2a10" stroke-width=".7" stroke-opacity=".55"/><ellipse cx="9.300" cy="3.900" rx="4.600" ry="2.100" fill="#fff" fill-opacity=".42"/></svg>
<div class="t" style="left:57.4px;top:225.7px;font-size:12.3px;letter-spacing:0.008px;">Prostor</div>
<div class="t" style="left:246px;top:225.7px;font-size:12.3px;">2</div>
<svg class="a" style="left:462px;top:228px;" width="14" height="13" viewBox="0 0 14 13"><rect x=".6" y=".6" width="12.600" height="11.600" fill="#fff" stroke="#1a1a1a" stroke-width="1.200"/><path d="M3 6.200l2.600 2.900 4.800-5.800" fill="none" stroke="#000" stroke-width="1.800"/></svg>
<div class="t" style="left:500.3px;top:225.7px;font-size:12.3px;letter-spacing:0.036px;">Chodba</div>
<div class="a" style="left:908px;top:226.5px;width:34px;height:17px;border:1px solid #505050;border-radius:2.500px;background:linear-gradient(180deg,#fff 0,#f6f6f6 50%,#dedede 100%);box-shadow:0 1px 0 #cfcfcf"></div>
<svg class="a" style="left:911px;top:228.5px;" width="14" height="13" viewBox="0 0 14 13"><path d="M1 6.300h10.200v5.900H1z" fill="#1b7d1b"/><path d="M6.600 6.500V4.300a2.300 2.300 0 0 1 4.600 0v1.300" fill="none" stroke="#1b7d1b" stroke-width="1.800"/></svg>
<svg class="a" style="left:927.5px;top:233.5px;" width="9" height="5" viewBox="0 0 9 5"><path d="M.5 .3h8L4.500 4.800z" fill="#000"/></svg>
<div class="a" style="left:945px;top:224px;width:47px;height:19px;border:1px solid #3edc3e;background:#fff"></div>
<div class="a b" style="left:947.5px;top:226.5px;width:18.5px;height:12.5px;background:#cfcfcf;font-size:10.3px;line-height:12.5px;text-align:center">2</div>
<div class="a b" style="left:970.4px;top:226.5px;width:18.5px;height:12.5px;background:#20e820;font-size:10.3px;line-height:12.5px;text-align:center">13</div>
<div class="a" style="left:9px;top:265px;width:1152px;height:1px;background:#eeeeee;"></div>
<svg class="a" style="left:12px;top:250px;" width="9" height="9" viewBox="0 0 9 9"><rect x=".5" y=".5" width="8" height="8" fill="#fff" stroke="#8a8a8a"/><path d="M2 4.5h5M4.5 2v5" stroke="#000" stroke-width="1.100"/></svg>
<svg class="a" style="left:26px;top:245px;" width="20" height="20" viewBox="0 0 20 20"><path d="M9.500 9.500L4.620 2.540A8.500 8.500 0 0 0 9.500 18z" fill="#1fa51f"/><path d="M9.500 9.500L4.620 2.540A8.500 8.500 0 0 1 18 9.500z" fill="#2263d2"/><path d="M10 10h8.600A8.500 8.500 0 0 1 10 18.600z" fill="#d8141a"/><circle cx="9.500" cy="9.500" r="8.500" fill="url(#gSph)"/><path d="M9.500 9.500L4.620 2.540A8.500 8.500 0 0 0 9.500 18M9.500 9.500L4.620 2.540A8.500 8.500 0 0 1 18 9.500" fill="none" stroke="#0c2a10" stroke-width=".7" stroke-opacity=".55"/><ellipse cx="9.300" cy="3.900" rx="4.600" ry="2.100" fill="#fff" fill-opacity=".42"/></svg>
<div class="t" style="left:57.4px;top:246.7px;font-size:12.3px;letter-spacing:0.008px;">Prostor</div>
<div class="t" style="left:246px;top:246.7px;font-size:12.3px;">3</div>
<svg class="a" style="left:462px;top:249px;" width="14" height="13" viewBox="0 0 14 13"><rect x=".6" y=".6" width="12.600" height="11.600" fill="#fff" stroke="#1a1a1a" stroke-width="1.200"/><path d="M3 6.200l2.600 2.900 4.800-5.800" fill="none" stroke="#000" stroke-width="1.800"/></svg>
<div class="t" style="left:500.3px;top:246.7px;font-size:12.3px;letter-spacing:-0.190px;">EKJ/Paradox</div>
<div class="a" style="left:908px;top:247.5px;width:34px;height:17px;border:1px solid #505050;border-radius:2.500px;background:linear-gradient(180deg,#fff 0,#f6f6f6 50%,#dedede 100%);box-shadow:0 1px 0 #cfcfcf"></div>
<svg class="a" style="left:911px;top:249.5px;" width="14" height="13" viewBox="0 0 14 13"><path d="M1 6.300h10.200v5.900H1z" fill="#1b7d1b"/><path d="M6.600 6.500V4.300a2.300 2.300 0 0 1 4.600 0v1.300" fill="none" stroke="#1b7d1b" stroke-width="1.800"/></svg>
<svg class="a" style="left:927.5px;top:254.5px;" width="9" height="5" viewBox="0 0 9 5"><path d="M.5 .3h8L4.500 4.800z" fill="#000"/></svg>
<div class="a" style="left:945px;top:245px;width:23px;height:19px;border:1px solid #3edc3e;background:#fff"></div>
<div class="a b" style="left:947.5px;top:247.5px;width:18.5px;height:12.5px;background:#cfcfcf;font-size:10.3px;line-height:12.5px;text-align:center">3</div>
<div class="a" style="left:9px;top:286px;width:1152px;height:1px;background:#eeeeee;"></div>
<svg class="a" style="left:12px;top:271px;" width="9" height="9" viewBox="0 0 9 9"><rect x=".5" y=".5" width="8" height="8" fill="#fff" stroke="#8a8a8a"/><path d="M2 4.5h5M4.5 2v5" stroke="#000" stroke-width="1.100"/></svg>
<svg class="a" style="left:26px;top:266px;" width="20" height="20" viewBox="0 0 20 20"><path d="M9.500 9.500L4.620 2.540A8.500 8.500 0 0 0 9.500 18z" fill="#1fa51f"/><path d="M9.500 9.500L4.620 2.540A8.500 8.500 0 0 1 18 9.500z" fill="#2263d2"/><path d="M10 10h8.600A8.500 8.500 0 0 1 10 18.600z" fill="#d8141a"/><circle cx="9.500" cy="9.500" r="8.500" fill="url(#gSph)"/><path d="M9.500 9.500L4.620 2.540A8.500 8.500 0 0 0 9.500 18M9.500 9.500L4.620 2.540A8.500 8.500 0 0 1 18 9.500" fill="none" stroke="#0c2a10" stroke-width=".7" stroke-opacity=".55"/><ellipse cx="9.300" cy="3.900" rx="4.600" ry="2.100" fill="#fff" fill-opacity=".42"/></svg>
<div class="t" style="left:57.4px;top:267.7px;font-size:12.3px;letter-spacing:0.008px;">Prostor</div>
<div class="t" style="left:246px;top:267.7px;font-size:12.3px;">4</div>
<svg class="a" style="left:462px;top:270px;" width="14" height="13" viewBox="0 0 14 13"><rect x=".6" y=".6" width="12.600" height="11.600" fill="#fff" stroke="#1a1a1a" stroke-width="1.200"/><path d="M3 6.200l2.600 2.900 4.800-5.800" fill="none" stroke="#000" stroke-width="1.800"/></svg>
<div class="t" style="left:500.3px;top:267.7px;font-size:12.3px;letter-spacing:-0.040px;">Hardware</div>
<div class="a" style="left:908px;top:268.5px;width:34px;height:17px;border:1px solid #505050;border-radius:2.500px;background:linear-gradient(180deg,#fff 0,#f6f6f6 50%,#dedede 100%);box-shadow:0 1px 0 #cfcfcf"></div>
<svg class="a" style="left:911px;top:270.5px;" width="14" height="13" viewBox="0 0 14 13"><path d="M1 6.300h10.200v5.900H1z" fill="#1b7d1b"/><path d="M6.600 6.500V4.300a2.300 2.300 0 0 1 4.600 0v1.300" fill="none" stroke="#1b7d1b" stroke-width="1.800"/></svg>
<svg class="a" style="left:927.5px;top:275.5px;" width="9" height="5" viewBox="0 0 9 5"><path d="M.5 .3h8L4.500 4.800z" fill="#000"/></svg>
<div class="a" style="left:945px;top:266px;width:23px;height:19px;border:1px solid #3edc3e;background:#fff"></div>
<div class="a b" style="left:947.5px;top:268.5px;width:18.5px;height:12.5px;background:#20e820;font-size:10.3px;line-height:12.5px;text-align:center">4</div>
<div class="a" style="left:9px;top:307px;width:1152px;height:1px;background:#eeeeee;"></div>
<svg class="a" style="left:26px;top:287px;" width="20" height="20" viewBox="0 0 20 20"><path d="M9.500 9.500L4.620 2.540A8.500 8.500 0 0 0 9.500 18z" fill="#1fa51f"/><path d="M9.500 9.500L4.620 2.540A8.500 8.500 0 0 1 18 9.500z" fill="#2263d2"/><path d="M10 10h8.600A8.500 8.500 0 0 1 10 18.600z" fill="#d8141a"/><circle cx="9.500" cy="9.500" r="8.500" fill="url(#gSph)"/><path d="M9.500 9.500L4.620 2.540A8.500 8.500 0 0 0 9.500 18M9.500 9.500L4.620 2.540A8.500 8.500 0 0 1 18 9.500" fill="none" stroke="#0c2a10" stroke-width=".7" stroke-opacity=".55"/><ellipse cx="9.300" cy="3.900" rx="4.600" ry="2.100" fill="#fff" fill-opacity=".42"/></svg>
<div class="t" style="left:57.4px;top:288.7px;font-size:12.3px;letter-spacing:0.008px;">Prostor</div>
<div class="t" style="left:246px;top:288.7px;font-size:12.3px;">5</div>
<svg class="a" style="left:462px;top:291px;" width="14" height="13" viewBox="0 0 14 13"><rect x=".6" y=".6" width="12.600" height="11.600" fill="#fff" stroke="#1a1a1a" stroke-width="1.200"/><path d="M3 6.200l2.600 2.900 4.800-5.800" fill="none" stroke="#000" stroke-width="1.800"/></svg>
<div class="t" style="left:500.3px;top:288.7px;font-size:12.3px;letter-spacing:0.136px;">Ustredna</div>
<div class="a" style="left:908px;top:289.5px;width:34px;height:17px;border:1px solid #505050;border-radius:2.500px;background:linear-gradient(180deg,#fff 0,#f6f6f6 50%,#dedede 100%);box-shadow:0 1px 0 #cfcfcf"></div>
<svg class="a" style="left:911px;top:291.5px;" width="14" height="13" viewBox="0 0 14 13"><path d="M1.500 6.300h10v5.900h-10z" fill="#d21a1a"/><path d="M4.200 6.500V5.600a2.300 2.300 0 0 1 4.600 0v.9" fill="none" stroke="#d21a1a" stroke-width="1.800"/><path d="M1.500 9h10" stroke="#8a0e0e" stroke-width=".8"/></svg>
<svg class="a" style="left:927.5px;top:296.5px;" width="9" height="5" viewBox="0 0 9 5"><path d="M.5 .3h8L4.500 4.800z" fill="#000"/></svg>
<div class="a" style="left:9px;top:328px;width:1152px;height:1px;background:#eeeeee;"></div>
<svg class="a" style="left:12px;top:313px;" width="9" height="9" viewBox="0 0 9 9"><rect x=".5" y=".5" width="8" height="8" fill="#fff" stroke="#8a8a8a"/><path d="M2 4.5h5M4.5 2v5" stroke="#000" stroke-width="1.100"/></svg>
<svg class="a" style="left:26px;top:308px;" width="20" height="20" viewBox="0 0 20 20"><path d="M9.500 9.500L4.620 2.540A8.500 8.500 0 0 0 9.500 18z" fill="#1fa51f"/><path d="M9.500 9.500L4.620 2.540A8.500 8.500 0 0 1 18 9.500z" fill="#2263d2"/><path d="M10 10h8.600A8.500 8.500 0 0 1 10 18.600z" fill="#d8141a"/><circle cx="9.500" cy="9.500" r="8.500" fill="url(#gSph)"/><path d="M9.500 9.500L4.620 2.540A8.500 8.500 0 0 0 9.500 18M9.500 9.500L4.620 2.540A8.500 8.500 0 0 1 18 9.500" fill="none" stroke="#0c2a10" stroke-width=".7" stroke-opacity=".55"/><ellipse cx="9.300" cy="3.900" rx="4.600" ry="2.100" fill="#fff" fill-opacity=".42"/></svg>
<div class="t" style="left:57.4px;top:309.7px;font-size:12.3px;letter-spacing:0.008px;">Prostor</div>
<div class="t" style="left:246px;top:309.7px;font-size:12.3px;">6</div>
<svg class="a" style="left:462px;top:312px;" width="14" height="13" viewBox="0 0 14 13"><rect x=".6" y=".6" width="12.600" height="11.600" fill="#fff" stroke="#1a1a1a" stroke-width="1.200"/><path d="M3 6.200l2.600 2.900 4.800-5.800" fill="none" stroke="#000" stroke-width="1.800"/></svg>
<div class="t" style="left:500.3px;top:309.7px;font-size:12.3px;letter-spacing:-0.025px;">Tlacitka test</div>
<div class="a" style="left:908px;top:310.5px;width:34px;height:17px;border:1px solid #505050;border-radius:2.500px;background:linear-gradient(180deg,#fff 0,#f6f6f6 50%,#dedede 100%);box-shadow:0 1px 0 #cfcfcf"></div>
<svg class="a" style="left:911px;top:312.5px;" width="14" height="13" viewBox="0 0 14 13"><path d="M1 6.300h10.200v5.900H1z" fill="#1b7d1b"/><path d="M6.600 6.500V4.300a2.300 2.300 0 0 1 4.600 0v1.300" fill="none" stroke="#1b7d1b" stroke-width="1.800"/></svg>
<svg class="a" style="left:927.5px;top:317.5px;" width="9" height="5" viewBox="0 0 9 5"><path d="M.5 .3h8L4.500 4.800z" fill="#000"/></svg>
<div class="a" style="left:945px;top:308px;width:93px;height:19px;border:1px solid #3edc3e;background:#fff"></div>
<div class="a b" style="left:947.5px;top:310.5px;width:18.5px;height:12.5px;background:#cfcfcf;font-size:10.3px;line-height:12.5px;text-align:center">7</div>
<div class="a b" style="left:970.4px;top:310.5px;width:18.5px;height:12.5px;background:#cfcfcf;font-size:10.3px;line-height:12.5px;text-align:center">8</div>
<div class="a b" style="left:993.3px;top:310.5px;width:18.5px;height:12.5px;background:#cfcfcf;font-size:10.3px;line-height:12.5px;text-align:center">9</div>
<div class="a b" style="left:1016.2px;top:310.5px;width:18.5px;height:12.5px;background:#20e820;font-size:10.3px;line-height:12.5px;text-align:center">10</div>
<div class="a" style="left:9px;top:349px;width:1152px;height:1px;background:#eeeeee;"></div>
<svg class="a" style="left:12px;top:334px;" width="9" height="9" viewBox="0 0 9 9"><rect x=".5" y=".5" width="8" height="8" fill="#fff" stroke="#8a8a8a"/><path d="M2 4.5h5M4.5 2v5" stroke="#000" stroke-width="1.100"/></svg>
<svg class="a" style="left:26px;top:329px;" width="20" height="20" viewBox="0 0 20 20"><path d="M9.500 9.500L4.620 2.540A8.500 8.500 0 0 0 9.500 18z" fill="#1fa51f"/><path d="M9.500 9.500L4.620 2.540A8.500 8.500 0 0 1 18 9.500z" fill="#2263d2"/><path d="M10 10h8.600A8.500 8.500 0 0 1 10 18.600z" fill="#d8141a"/><circle cx="9.500" cy="9.500" r="8.500" fill="url(#gSph)"/><path d="M9.500 9.500L4.620 2.540A8.500 8.500 0 0 0 9.500 18M9.500 9.500L4.620 2.540A8.500 8.500 0 0 1 18 9.500" fill="none" stroke="#0c2a10" stroke-width=".7" stroke-opacity=".55"/><ellipse cx="9.300" cy="3.900" rx="4.600" ry="2.100" fill="#fff" fill-opacity=".42"/></svg>
<div class="t" style="left:57.4px;top:330.7px;font-size:12.3px;letter-spacing:0.008px;">Prostor</div>
<div class="t" style="left:246px;top:330.7px;font-size:12.3px;">7</div>
<svg class="a" style="left:462px;top:333px;" width="14" height="13" viewBox="0 0 14 13"><rect x=".6" y=".6" width="12.600" height="11.600" fill="#fff" stroke="#1a1a1a" stroke-width="1.200"/><path d="M3 6.200l2.600 2.900 4.800-5.800" fill="none" stroke="#000" stroke-width="1.800"/></svg>
<div class="t" style="left:500.3px;top:330.7px;font-size:12.3px;letter-spacing:-0.371px;">CRM</div>
<div class="a" style="left:908px;top:331.5px;width:34px;height:17px;border:1px solid #505050;border-radius:2.500px;background:linear-gradient(180deg,#fff 0,#f6f6f6 50%,#dedede 100%);box-shadow:0 1px 0 #cfcfcf"></div>
<svg class="a" style="left:911px;top:333.5px;" width="14" height="13" viewBox="0 0 14 13"><path d="M1 6.300h10.200v5.900H1z" fill="#1b7d1b"/><path d="M6.600 6.500V4.300a2.300 2.300 0 0 1 4.600 0v1.300" fill="none" stroke="#1b7d1b" stroke-width="1.800"/></svg>
<svg class="a" style="left:927.5px;top:338.5px;" width="9" height="5" viewBox="0 0 9 5"><path d="M.5 .3h8L4.500 4.800z" fill="#000"/></svg>
<div class="a" style="left:945px;top:329px;width:23px;height:19px;border:1px solid #3edc3e;background:#fff"></div>
<div class="a b" style="left:947.5px;top:331.5px;width:18.5px;height:12.5px;background:#cfcfcf;font-size:10.3px;line-height:12.5px;text-align:center">11</div>
<div class="a" style="left:9px;top:370px;width:1152px;height:1px;background:#eeeeee;"></div>
<svg class="a" style="left:12px;top:355px;" width="9" height="9" viewBox="0 0 9 9"><rect x=".5" y=".5" width="8" height="8" fill="#fff" stroke="#8a8a8a"/><path d="M2 4.5h5M4.5 2v5" stroke="#000" stroke-width="1.100"/></svg>
<svg class="a" style="left:26px;top:350px;" width="20" height="20" viewBox="0 0 20 20"><path d="M9.500 9.500L4.620 2.540A8.500 8.500 0 0 0 9.500 18z" fill="#1fa51f"/><path d="M9.500 9.500L4.620 2.540A8.500 8.500 0 0 1 18 9.500z" fill="#2263d2"/><path d="M10 10h8.600A8.500 8.500 0 0 1 10 18.600z" fill="#d8141a"/><circle cx="9.500" cy="9.500" r="8.500" fill="url(#gSph)"/><path d="M9.500 9.500L4.620 2.540A8.500 8.500 0 0 0 9.500 18M9.500 9.500L4.620 2.540A8.500 8.500 0 0 1 18 9.500" fill="none" stroke="#0c2a10" stroke-width=".7" stroke-opacity=".55"/><ellipse cx="9.300" cy="3.900" rx="4.600" ry="2.100" fill="#fff" fill-opacity=".42"/></svg>
<div class="t" style="left:57.4px;top:351.7px;font-size:12.3px;letter-spacing:0.008px;">Prostor</div>
<div class="t" style="left:246px;top:351.7px;font-size:12.3px;">8</div>
<svg class="a" style="left:462px;top:354px;" width="14" height="13" viewBox="0 0 14 13"><rect x=".6" y=".6" width="12.600" height="11.600" fill="#fff" stroke="#1a1a1a" stroke-width="1.200"/><path d="M3 6.200l2.600 2.900 4.800-5.800" fill="none" stroke="#000" stroke-width="1.800"/></svg>
<div class="t" style="left:500.3px;top:351.7px;font-size:12.3px;letter-spacing:-0.052px;">Zasedacka</div>
<div class="a" style="left:908px;top:352.5px;width:34px;height:17px;border:1px solid #505050;border-radius:2.500px;background:linear-gradient(180deg,#fff 0,#f6f6f6 50%,#dedede 100%);box-shadow:0 1px 0 #cfcfcf"></div>
<svg class="a" style="left:911px;top:354.5px;" width="14" height="13" viewBox="0 0 14 13"><path d="M1 6.300h10.200v5.900H1z" fill="#1b7d1b"/><path d="M6.600 6.500V4.300a2.300 2.300 0 0 1 4.600 0v1.300" fill="none" stroke="#1b7d1b" stroke-width="1.800"/></svg>
<svg class="a" style="left:927.5px;top:359.5px;" width="9" height="5" viewBox="0 0 9 5"><path d="M.5 .3h8L4.500 4.800z" fill="#000"/></svg>
<div class="a" style="left:945px;top:350px;width:23px;height:19px;border:1px solid #3edc3e;background:#fff"></div>
<div class="a b" style="left:947.5px;top:352.5px;width:18.5px;height:12.5px;background:#cfcfcf;font-size:10.3px;line-height:12.5px;text-align:center">12</div>
<div class="a" style="left:9px;top:391px;width:1152px;height:1px;background:#eeeeee;"></div>
<svg class="a" style="left:12px;top:376px;" width="9" height="9" viewBox="0 0 9 9"><rect x=".5" y=".5" width="8" height="8" fill="#fff" stroke="#8a8a8a"/><path d="M2 4.5h5M4.5 2v5" stroke="#000" stroke-width="1.100"/></svg>
<svg class="a" style="left:26px;top:371px;" width="20" height="20" viewBox="0 0 20 20"><path d="M9.500 9.500L4.620 2.540A8.500 8.500 0 0 0 9.500 18z" fill="#1fa51f"/><path d="M9.500 9.500L4.620 2.540A8.500 8.500 0 0 1 18 9.500z" fill="#2263d2"/><path d="M10 10h8.600A8.500 8.500 0 0 1 10 18.600z" fill="#d8141a"/><circle cx="9.500" cy="9.500" r="8.500" fill="url(#gSph)"/><path d="M9.500 9.500L4.620 2.540A8.500 8.500 0 0 0 9.500 18M9.500 9.500L4.620 2.540A8.500 8.500 0 0 1 18 9.500" fill="none" stroke="#0c2a10" stroke-width=".7" stroke-opacity=".55"/><ellipse cx="9.300" cy="3.900" rx="4.600" ry="2.100" fill="#fff" fill-opacity=".42"/></svg>
<div class="t" style="left:57.4px;top:372.7px;font-size:12.3px;letter-spacing:0.008px;">Prostor</div>
<div class="t" style="left:246px;top:372.7px;font-size:12.3px;">9</div>
<svg class="a" style="left:462px;top:375px;" width="14" height="13" viewBox="0 0 14 13"><rect x=".6" y=".6" width="12.600" height="11.600" fill="#fff" stroke="#1a1a1a" stroke-width="1.200"/><path d="M3 6.200l2.600 2.900 4.800-5.800" fill="none" stroke="#000" stroke-width="1.800"/></svg>
<div class="t" style="left:500.3px;top:372.7px;font-size:12.3px;letter-spacing:-0.121px;">CCTV</div>
<div class="a" style="left:908px;top:373.5px;width:34px;height:17px;border:1px solid #505050;border-radius:2.500px;background:linear-gradient(180deg,#fff 0,#f6f6f6 50%,#dedede 100%);box-shadow:0 1px 0 #cfcfcf"></div>
<svg class="a" style="left:911px;top:375.5px;" width="14" height="13" viewBox="0 0 14 13"><path d="M1 6.300h10.200v5.900H1z" fill="#1b7d1b"/><path d="M6.600 6.500V4.300a2.300 2.300 0 0 1 4.600 0v1.300" fill="none" stroke="#1b7d1b" stroke-width="1.800"/></svg>
<svg class="a" style="left:927.5px;top:380.5px;" width="9" height="5" viewBox="0 0 9 5"><path d="M.5 .3h8L4.500 4.800z" fill="#000"/></svg>
<div class="a" style="left:945px;top:371px;width:23px;height:19px;border:1px solid #3edc3e;background:#fff"></div>
<div class="a b" style="left:947.5px;top:373.5px;width:18.5px;height:12.5px;background:#cfcfcf;font-size:10.3px;line-height:12.5px;text-align:center">14</div>
<div class="a" style="left:9px;top:391px;width:1152px;height:21px;background:#e7ebf6;"></div>
<svg class="a" style="left:26px;top:392px;" width="20" height="20" viewBox="0 0 20 20"><path d="M9.500 9.500L4.620 2.540A8.500 8.500 0 0 0 9.500 18z" fill="#1fa51f"/><path d="M9.500 9.500L4.620 2.540A8.500 8.500 0 0 1 18 9.500z" fill="#2263d2"/><path d="M10 10h8.600A8.500 8.500 0 0 1 10 18.600z" fill="#d8141a"/><circle cx="9.500" cy="9.500" r="8.500" fill="url(#gSph)"/><path d="M9.500 9.500L4.620 2.540A8.500 8.500 0 0 0 9.500 18M9.500 9.500L4.620 2.540A8.500 8.500 0 0 1 18 9.500" fill="none" stroke="#0c2a10" stroke-width=".7" stroke-opacity=".55"/><ellipse cx="9.300" cy="3.900" rx="4.600" ry="2.100" fill="#fff" fill-opacity=".42"/></svg>
<div class="t" style="left:57.4px;top:393.7px;font-size:12.3px;letter-spacing:0.008px;">Prostor</div>
<div class="t" style="left:245px;top:393.7px;font-size:12.3px;">10</div>
<svg class="a" style="left:462px;top:396px;" width="14" height="13" viewBox="0 0 14 13"><rect x=".6" y=".6" width="12.600" height="11.600" fill="#fff" stroke="#1a1a1a" stroke-width="1.200"/><path d="M3 6.200l2.600 2.900 4.800-5.800" fill="none" stroke="#000" stroke-width="1.800"/></svg>
<div class="t" style="left:500.3px;top:393.7px;font-size:12.3px;letter-spacing:-0.190px;">Area 010</div>
<div class="a" style="left:908px;top:394.5px;width:34px;height:17px;border:1px solid #505050;border-radius:2.500px;background:linear-gradient(180deg,#fff 0,#f6f6f6 50%,#dedede 100%);box-shadow:0 1px 0 #cfcfcf"></div>
<svg class="a" style="left:911px;top:396.5px;" width="14" height="13" viewBox="0 0 14 13"><path d="M1 6.300h10.200v5.900H1z" fill="#1b7d1b"/><path d="M6.600 6.500V4.300a2.300 2.300 0 0 1 4.600 0v1.300" fill="none" stroke="#1b7d1b" stroke-width="1.800"/></svg>
<svg class="a" style="left:927.5px;top:401.5px;" width="9" height="5" viewBox="0 0 9 5"><path d="M.5 .3h8L4.500 4.800z" fill="#000"/></svg>
<div class="a" style="left:9px;top:433px;width:1152px;height:1px;background:#eeeeee;"></div>
<svg class="a" style="left:12px;top:418px;" width="9" height="9" viewBox="0 0 9 9"><rect x=".5" y=".5" width="8" height="8" fill="#fff" stroke="#8a8a8a"/><path d="M2 4.5h5M4.5 2v5" stroke="#000" stroke-width="1.100"/></svg>
<svg class="a" style="left:26px;top:413px;" width="20" height="20" viewBox="0 0 20 20"><path d="M9.500 9.500L4.620 2.540A8.500 8.500 0 0 0 9.500 18z" fill="#1fa51f"/><path d="M9.500 9.500L4.620 2.540A8.500 8.500 0 0 1 18 9.500z" fill="#2263d2"/><path d="M10 10h8.600A8.500 8.500 0 0 1 10 18.600z" fill="#d8141a"/><circle cx="9.500" cy="9.500" r="8.500" fill="url(#gSph)"/><path d="M9.500 9.500L4.620 2.540A8.500 8.500 0 0 0 9.500 18M9.500 9.500L4.620 2.540A8.500 8.500 0 0 1 18 9.500" fill="none" stroke="#0c2a10" stroke-width=".7" stroke-opacity=".55"/><ellipse cx="9.300" cy="3.900" rx="4.600" ry="2.100" fill="#fff" fill-opacity=".42"/></svg>
<div class="t" style="left:57.4px;top:414.7px;font-size:12.3px;letter-spacing:0.008px;">Prostor</div>
<div class="t" style="left:245px;top:414.7px;font-size:12.3px;">11</div>
<svg class="a" style="left:462px;top:417px;" width="14" height="13" viewBox="0 0 14 13"><rect x=".6" y=".6" width="12.600" height="11.600" fill="#fff" stroke="#1a1a1a" stroke-width="1.200"/><path d="M3 6.200l2.600 2.900 4.800-5.800" fill="none" stroke="#000" stroke-width="1.800"/></svg>
<div class="t" style="left:500.3px;top:414.7px;font-size:12.3px;letter-spacing:-0.600px;">Podhled</div>
<div class="a" style="left:908px;top:415.5px;width:34px;height:17px;border:1px solid #505050;border-radius:2.500px;background:linear-gradient(180deg,#fff 0,#f6f6f6 50%,#dedede 100%);box-shadow:0 1px 0 #cfcfcf"></div>
<svg class="a" style="left:911px;top:417.5px;" width="14" height="13" viewBox="0 0 14 13"><path d="M1.500 6.300h10v5.900h-10z" fill="#d21a1a"/><path d="M4.200 6.500V5.600a2.300 2.300 0 0 1 4.600 0v.9" fill="none" stroke="#d21a1a" stroke-width="1.800"/><path d="M1.500 9h10" stroke="#8a0e0e" stroke-width=".8"/></svg>
<svg class="a" style="left:927.5px;top:422.5px;" width="9" height="5" viewBox="0 0 9 5"><path d="M.5 .3h8L4.500 4.800z" fill="#000"/></svg>
<div class="a" style="left:945px;top:413px;width:23px;height:19px;border:1px solid #c43a3a;background:#fff"></div>
<div class="a b" style="left:947.5px;top:415.5px;width:18.5px;height:12.5px;background:#cfcfcf;font-size:10.3px;line-height:12.5px;text-align:center">16</div>
<div class="a" style="left:9px;top:454px;width:1152px;height:1px;background:#eeeeee;"></div>
<svg class="a" style="left:12px;top:439px;" width="9" height="9" viewBox="0 0 9 9"><rect x=".5" y=".5" width="8" height="8" fill="#fff" stroke="#8a8a8a"/><path d="M2 4.5h5M4.5 2v5" stroke="#000" stroke-width="1.100"/></svg>
<svg class="a" style="left:26px;top:434px;" width="20" height="20" viewBox="0 0 20 20"><path d="M9.500 9.500L4.620 2.540A8.500 8.500 0 0 0 9.500 18z" fill="#1fa51f"/><path d="M9.500 9.500L4.620 2.540A8.500 8.500 0 0 1 18 9.500z" fill="#2263d2"/><path d="M10 10h8.600A8.500 8.500 0 0 1 10 18.600z" fill="#d8141a"/><circle cx="9.500" cy="9.500" r="8.500" fill="url(#gSph)"/><path d="M9.500 9.500L4.620 2.540A8.500 8.500 0 0 0 9.500 18M9.500 9.500L4.620 2.540A8.500 8.500 0 0 1 18 9.500" fill="none" stroke="#0c2a10" stroke-width=".7" stroke-opacity=".55"/><ellipse cx="9.300" cy="3.900" rx="4.600" ry="2.100" fill="#fff" fill-opacity=".42"/></svg>
<div class="t" style="left:57.4px;top:435.7px;font-size:12.3px;letter-spacing:0.008px;">Prostor</div>
<div class="t" style="left:245px;top:435.7px;font-size:12.3px;">12</div>
<svg class="a" style="left:462px;top:438px;" width="14" height="13" viewBox="0 0 14 13"><rect x=".6" y=".6" width="12.600" height="11.600" fill="#fff" stroke="#1a1a1a" stroke-width="1.200"/><path d="M3 6.200l2.600 2.900 4.800-5.800" fill="none" stroke="#000" stroke-width="1.800"/></svg>
<div class="t" style="left:500.3px;top:435.7px;font-size:12.3px;letter-spacing:0.035px;">Test</div>
<div class="a" style="left:908px;top:436.5px;width:34px;height:17px;border:1px solid #505050;border-radius:2.500px;background:linear-gradient(180deg,#fff 0,#f6f6f6 50%,#dedede 100%);box-shadow:0 1px 0 #cfcfcf"></div>
<svg class="a" style="left:911px;top:438.5px;" width="14" height="13" viewBox="0 0 14 13"><path d="M1 6.300h10.200v5.900H1z" fill="#1b7d1b"/><path d="M6.600 6.500V4.300a2.300 2.300 0 0 1 4.600 0v1.300" fill="none" stroke="#1b7d1b" stroke-width="1.800"/></svg>
<svg class="a" style="left:927.5px;top:443.5px;" width="9" height="5" viewBox="0 0 9 5"><path d="M.5 .3h8L4.500 4.800z" fill="#000"/></svg>
<div class="a" style="left:945px;top:434px;width:23px;height:19px;border:1px solid #3edc3e;background:#fff"></div>
<div class="a b" style="left:947.5px;top:436.5px;width:18.5px;height:12.5px;background:#cfcfcf;font-size:10.3px;line-height:12.5px;text-align:center">5</div>
<div class="a" style="left:9px;top:507px;width:1152px;height:1px;background:#a0a0a0;"></div>
<div class="a" style="left:9px;top:508px;width:1152px;height:15px;background:#f0f0f0;"></div>
<div class="a" style="left:9px;top:523px;width:1152px;height:1px;background:#a0a0a0;"></div>
<div class="a" style="left:9px;top:508px;width:17px;height:15px;background:#f4f4f4;border-right:1px solid #9c9c9c;"></div>
<svg class="a" style="left:14px;top:511px;" width="6" height="9" viewBox="0 0 6 9"><path d="M5.500 .5v8L.8 4.500z" fill="#000"/></svg>
<div class="a" style="left:888px;top:508px;width:256px;height:15px;background:repeating-conic-gradient(#fff 0 25%,#e9e9e9 0 50%) 0 0/2px 2px;"></div>
<div class="a" style="left:887px;top:508px;width:1px;height:15px;background:#9c9c9c;"></div>
<div class="a" style="left:1144px;top:508px;width:17px;height:15px;background:#f4f4f4;border-left:1px solid #9c9c9c;"></div>
<svg class="a" style="left:1150px;top:511px;" width="6" height="9" viewBox="0 0 6 9"><path d="M.5 .5v8L5.200 4.500z" fill="#000"/></svg>
<!-- legend, events, status -->
<div class="a" style="left:7px;top:524px;width:1154px;height:42px;background:#f0f0f0;"></div>
<div class="t" style="left:16.6px;top:529.7px;font-size:12.3px;font-weight:bold;letter-spacing:-0.359px;">Legenda:</div>
<div class="a" style="left:90px;top:531px;width:16px;height:13px;background:#f0f0f0;border:1px solid #000;"></div>
<div class="t" style="left:109px;top:529.7px;font-size:12.3px;">Zona</div>
<div class="a" style="left:176px;top:531px;width:17px;height:13px;background:#f0f0f0;border:1px solid #000;border-radius:5px;"></div>
<div class="a" style="left:91px;top:549px;width:14px;height:12px;background:#c8c8c8;"></div>
<div class="a" style="left:109px;top:546px;width:63px;height:17px;overflow:hidden"><div class="t" style="left:0;top:.7px;font-size:12.300px">Vypnuto / za</div></div>
<div class="a" style="left:177px;top:549px;width:14px;height:12px;background:#22e622;"></div>
<svg class="a" style="left:459px;top:531px;" width="18" height="14" viewBox="0 0 18 14"><path d="M9 1.200L16.800 13H1.200z" fill="#f6f6f6" stroke="#000" stroke-width="1.200" stroke-linejoin="round"/></svg>
<div class="t" style="left:479.2px;top:529.7px;font-size:12.3px;letter-spacing:-0.035px;">Hub / Napájení</div>
<div class="a" style="left:461px;top:549px;width:14px;height:12px;background:#c8c8c8;border:2px solid #c22525;"></div>
<div class="t" style="left:479.2px;top:546.7px;font-size:12.3px;letter-spacing:0.026px;">Pamet poplachu</div>
<div class="a" style="left:576px;top:549px;width:14px;height:12px;background:#c8c8c8;border:2px solid #ead58c;"></div>
<div class="t" style="left:594.6px;top:546.7px;font-size:12.3px;letter-spacing:-0.027px;">Tamper/Porucha</div>
<div class="a" style="left:703px;top:549px;width:14px;height:12px;background:#58b8f2;"></div>
<div class="t" style="left:720.8px;top:546.7px;font-size:12.3px;letter-spacing:0.134px;">Přemostěno</div>
<div class="a" style="left:796px;top:549px;width:12px;height:11px;background:#c4d2dc;border:1.500px solid #55b8e2;"></div>
<div class="t" style="left:812.7px;top:546.7px;font-size:12.3px;letter-spacing:0.113px;">Pamět přemostění</div>
<div class="a" style="left:920px;top:549px;width:13px;height:11px;background:#0a0505;border:1.500px solid #b23a1e;"></div>
<div class="t" style="left:937.8px;top:546.7px;font-size:12.3px;letter-spacing:-0.176px;">Testovací režim</div>
<div class="a" style="left:1030px;top:547px;width:16px;height:15px;background:#fff;border:1px solid #c6c6c6;border-radius:8px;"></div>
<div class="t" style="left:1051.5px;top:546.7px;font-size:12.3px;letter-spacing:-0.155px;">Stav nedostupný</div>
<div class="a" style="left:7px;top:565px;width:1154px;height:1px;background:#b4b4b4;"></div>
<div class="a" style="left:7px;top:566px;width:1154px;height:14px;background:#f0f0f0;"></div>
<div class="a" style="left:7px;top:580px;width:1154px;height:2px;background:#9a9a9a;"></div>
<div class="a" style="left:535px;top:567px;width:100px;height:12px;background:#f6f6f6;border:1px solid #8c8c8c;"></div>
<svg class="a" style="left:545px;top:569.5px;" width="15" height="8" viewBox="0 0 15 8"><path d="M.5 .5h14L7.500 7.500z" fill="#0a0a6e"/></svg>
<svg class="a" style="left:612px;top:569.5px;" width="15" height="8" viewBox="0 0 15 8"><path d="M.5 .5h14L7.500 7.500z" fill="#0a0a6e"/></svg>
<div class="a" style="left:563px;top:571px;width:46px;height:5px;background:repeating-conic-gradient(#f6f6f6 0 25%,#55558a 0 50%) 0 0/2px 2px;opacity:.7;"></div>
<div class="a" style="left:7px;top:582px;width:1154px;height:26px;background:#f0f0f0;"></div>
<div class="a" style="left:10px;top:584px;width:215px;height:21px;background:#fff;border:1px solid #8e8e8e;box-shadow:inset 1px 1px 0 #c8c8c8;"></div>
<div class="t" style="left:13px;top:586.5px;font-size:12.3px;letter-spacing:-0.000px;">Všechny události</div>
<div class="a" style="left:7px;top:607px;width:1154px;height:2px;background:#8a8a8a;"></div>
<div class="a" style="left:7px;top:609px;width:2px;height:118px;background:#9a9a9a;"></div>
<div class="a" style="left:9px;top:609px;width:1152px;height:22px;background:#f0f0f0;"></div>
<div class="t" style="left:15.2px;top:612.7px;font-size:12.6px;letter-spacing:0.225px;">Datum a čas</div>
<svg class="a" style="left:97px;top:616px;" width="11" height="9" viewBox="0 0 11 9"><path d="M.6 .6h9.800L5.500 8.500z" fill="#000"/></svg>
<svg class="a" style="left:441px;top:612px;" width="16" height="17" viewBox="0 0 16 17"><circle cx="6.200" cy="5.900" r="5.300" fill="#d6d6d6" stroke="#151515" stroke-width="1.100"/><path d="M3 5.200a3.400 3.400 0 0 1 3.200-2.700" fill="none" stroke="#fff" stroke-width="1.300" stroke-opacity=".85"/><path d="M10.300 10.300l3.400 4.200" stroke="#1a1a72" stroke-width="3.100" stroke-linecap="round"/></svg>
<div class="a" style="left:190.5px;top:616px;width:1.5px;height:4px;background:#111;"></div>
<div class="a" style="left:458px;top:609px;width:2px;height:22px;background:#fbfbfb;"></div>
<div class="a" style="left:608px;top:609px;width:2px;height:22px;background:#fbfbfb;"></div>
<div class="a" style="left:708px;top:609px;width:2px;height:22px;background:#fbfbfb;"></div>
<div class="a" style="left:907px;top:609px;width:2px;height:22px;background:#fbfbfb;"></div>
<div class="a" style="left:1103px;top:609px;width:2px;height:22px;background:#fbfbfb;"></div>
<div class="t" style="left:465.3px;top:612.7px;font-size:12.3px;letter-spacing:0.173px;">Umístění</div>
<svg class="a" style="left:591px;top:612px;" width="16" height="17" viewBox="0 0 16 17"><circle cx="6.200" cy="5.900" r="5.300" fill="#d6d6d6" stroke="#151515" stroke-width="1.100"/><path d="M3 5.200a3.400 3.400 0 0 1 3.200-2.700" fill="none" stroke="#fff" stroke-width="1.300" stroke-opacity=".85"/><path d="M10.300 10.300l3.400 4.200" stroke="#1a1a72" stroke-width="3.100" stroke-linecap="round"/></svg>
<div class="t" style="left:615.5px;top:612.7px;font-size:12.3px;letter-spacing:0.061px;">Sériové číslo</div>
<svg class="a" style="left:691px;top:612px;" width="16" height="17" viewBox="0 0 16 17"><circle cx="6.200" cy="5.900" r="5.300" fill="#d6d6d6" stroke="#151515" stroke-width="1.100"/><path d="M3 5.200a3.400 3.400 0 0 1 3.200-2.700" fill="none" stroke="#fff" stroke-width="1.300" stroke-opacity=".85"/><path d="M10.300 10.300l3.400 4.200" stroke="#1a1a72" stroke-width="3.100" stroke-linecap="round"/></svg>
<div class="t" style="left:715px;top:612.7px;font-size:12.3px;letter-spacing:0.461px;">Poznámka</div>
<svg class="a" style="left:891px;top:612px;" width="16" height="17" viewBox="0 0 16 17"><circle cx="6.200" cy="5.900" r="5.300" fill="#d6d6d6" stroke="#151515" stroke-width="1.100"/><path d="M3 5.200a3.400 3.400 0 0 1 3.200-2.700" fill="none" stroke="#fff" stroke-width="1.300" stroke-opacity=".85"/><path d="M10.300 10.300l3.400 4.200" stroke="#1a1a72" stroke-width="3.100" stroke-linecap="round"/></svg>
<div class="t" style="left:915.4px;top:612.7px;font-size:12.3px;letter-spacing:0.129px;">Doplnkové informace</div>
<svg class="a" style="left:1086px;top:612px;" width="16" height="17" viewBox="0 0 16 17"><circle cx="6.200" cy="5.900" r="5.300" fill="#d6d6d6" stroke="#151515" stroke-width="1.100"/><path d="M3 5.200a3.400 3.400 0 0 1 3.200-2.700" fill="none" stroke="#fff" stroke-width="1.300" stroke-opacity=".85"/><path d="M10.300 10.300l3.400 4.200" stroke="#1a1a72" stroke-width="3.100" stroke-linecap="round"/></svg>
<div class="a" style="left:1105px;top:609px;width:56px;height:22px;overflow:hidden"><div class="t" style="left:5px;top:3.700px;font-size:12.300px;letter-spacing:.25px">Jméno uživatele</div></div>
<div class="a" style="left:9px;top:631px;width:1134px;height:79px;background:#040d40;overflow:hidden;color:#fff">
<div class="t" style="left:23.5px;top:1.6px;font-size:12.7px;color:#fff;letter-spacing:0.017px;">1 09, 2012</div>
<div class="t" style="left:92.8px;top:1.6px;font-size:12.7px;color:#fff;letter-spacing:-0.037px;">11:00:00</div>
<div class="t" style="left:608px;top:1.6px;font-size:12.7px;color:#fff;letter-spacing:-0.138px;">06005163</div>
<div class="t" style="left:708.7px;top:1.6px;font-size:12.7px;color:#fff;letter-spacing:-0.125px;">Testovací zpráva</div>
<div class="t" style="left:908px;top:1.6px;font-size:12.7px;color:#fff;letter-spacing:0.211px;">Automaticky v čase</div>
<div class="t" style="left:23.5px;top:19.6px;font-size:12.7px;color:#fff;letter-spacing:0.017px;">1 09, 2012</div>
<div class="t" style="left:92.8px;top:19.6px;font-size:12.7px;color:#fff;letter-spacing:-0.154px;">10:30:23</div>
<div class="t" style="left:608px;top:19.6px;font-size:12.7px;color:#fff;letter-spacing:-0.138px;">06005163</div>
<div class="t" style="left:708.7px;top:19.6px;font-size:12.7px;color:#fff;letter-spacing:0.034px;">Výstup z programování</div>
<div class="t" style="left:908px;top:19.6px;font-size:12.7px;color:#fff;letter-spacing:0.084px;">Software IP linka</div>
<div class="t" style="left:1103.5px;top:19.6px;font-size:12.7px;color:#fff;letter-spacing:-0.118px;">admin</div>
<div class="t" style="left:23.5px;top:37.6px;font-size:12.7px;color:#fff;letter-spacing:0.017px;">1 09, 2012</div>
<div class="t" style="left:92.8px;top:37.6px;font-size:12.7px;color:#fff;letter-spacing:-0.154px;">10:30:22</div>
<div class="t" style="left:208.4px;top:37.6px;font-size:12.7px;color:#fff;letter-spacing:-0.158px;">admin</div>
<div class="t" style="left:358.3px;top:37.6px;font-size:12.7px;color:#fff;letter-spacing:0.010px;">Uživatel: 1</div>
<div class="t" style="left:608px;top:37.6px;font-size:12.7px;color:#fff;letter-spacing:-0.138px;">06005163</div>
<div class="t" style="left:708.7px;top:37.6px;font-size:12.7px;color:#fff;letter-spacing:-0.034px;">Vstup do programování</div>
<div class="t" style="left:908px;top:37.6px;font-size:12.7px;color:#fff;letter-spacing:0.084px;">Software IP linka</div>
<div class="t" style="left:1103.5px;top:37.6px;font-size:12.7px;color:#fff;letter-spacing:-0.118px;">admin</div>
<div class="t" style="left:23.5px;top:55.6px;font-size:12.7px;color:#fff;letter-spacing:0.017px;">1 09, 2012</div>
<div class="t" style="left:92.8px;top:55.6px;font-size:12.7px;color:#fff;letter-spacing:-0.154px;">10:23:04</div>
<div class="t" style="left:208.4px;top:55.6px;font-size:12.7px;color:#fff;letter-spacing:-0.158px;">admin</div>
<div class="t" style="left:358.3px;top:55.6px;font-size:12.7px;color:#fff;letter-spacing:0.010px;">Uživatel: 1</div>
<div class="t" style="left:608px;top:55.6px;font-size:12.7px;color:#fff;letter-spacing:-0.138px;">06005163</div>
<div class="t" style="left:708.7px;top:55.6px;font-size:12.7px;color:#fff;letter-spacing:0.034px;">Výstup z programování</div>
<div class="t" style="left:908px;top:55.6px;font-size:12.7px;color:#fff;letter-spacing:0.084px;">Software IP linka</div>
<div class="t" style="left:1103.5px;top:55.6px;font-size:12.7px;color:#fff;letter-spacing:-0.118px;">admin</div>
<div class="t" style="left:23.5px;top:73.6px;font-size:12.7px;color:#fff;letter-spacing:0.017px;">1 09, 2012</div>
<div class="t" style="left:92.8px;top:73.6px;font-size:12.7px;color:#fff;letter-spacing:-0.154px;">10:23:03</div>
<div class="t" style="left:208.4px;top:73.6px;font-size:12.7px;color:#fff;letter-spacing:-0.158px;">admin</div>
<div class="t" style="left:358.3px;top:73.6px;font-size:12.7px;color:#fff;letter-spacing:0.010px;">Uživatel: 1</div>
<div class="t" style="left:608px;top:73.6px;font-size:12.7px;color:#fff;letter-spacing:-0.138px;">06005163</div>
<div class="t" style="left:708.7px;top:73.6px;font-size:12.7px;color:#fff;letter-spacing:-0.034px;">Vstup do programování</div>
<div class="t" style="left:908px;top:73.6px;font-size:12.7px;color:#fff;letter-spacing:0.084px;">Software IP linka</div>
<div class="t" style="left:1103.5px;top:73.6px;font-size:12.7px;color:#fff;letter-spacing:-0.118px;">admin</div>
</div>
<div class="a" style="left:1143px;top:631px;width:18px;height:79px;background:#f0f0f0;border-left:1px solid #fff;"></div>
<div class="a" style="left:1144px;top:631px;width:17px;height:16px;background:#f2f2f2;border:1px solid #fff;border-right-color:#8c8c8c;border-bottom-color:#8c8c8c;"></div>
<svg class="a" style="left:1148px;top:636px;" width="9" height="6" viewBox="0 0 9 6"><path d="M4.500 .5L8.500 5.500H.5z" fill="#000"/></svg>
<div class="a" style="left:1144px;top:647px;width:17px;height:10px;background:#f2f2f2;border:1px solid #fff;border-right-color:#8c8c8c;border-bottom-color:#8c8c8c;"></div>
<div class="a" style="left:1144px;top:657px;width:17px;height:37px;background:repeating-conic-gradient(#fff 0 25%,#ededed 0 50%) 0 0/2px 2px;"></div>
<div class="a" style="left:1144px;top:694px;width:17px;height:16px;background:#f2f2f2;border:1px solid #fff;border-right-color:#8c8c8c;border-bottom-color:#8c8c8c;"></div>
<svg class="a" style="left:1148px;top:699px;" width="9" height="6" viewBox="0 0 9 6"><path d="M.5 .5h8L4.500 5.500z" fill="#000"/></svg>
<div class="a" style="left:9px;top:710px;width:1152px;height:17px;background:#f0f0f0;"></div>
<div class="a" style="left:9px;top:710px;width:17px;height:16px;background:#f4f4f4;border-right:1px solid #9c9c9c;border-bottom:1px solid #9c9c9c;"></div>
<svg class="a" style="left:14px;top:714px;" width="6" height="9" viewBox="0 0 6 9"><path d="M5.500 .5v8L.8 4.500z" fill="#000"/></svg>
<div class="a" style="left:26px;top:710px;width:876px;height:16px;background:#f0f0f0;border-right:1px solid #9c9c9c;border-bottom:1px solid #9c9c9c;"></div>
<div class="a" style="left:902px;top:710px;width:224px;height:16px;background:repeating-conic-gradient(#fff 0 25%,#ebebeb 0 50%) 0 0/2px 2px;"></div>
<div class="a" style="left:1126px;top:710px;width:17px;height:16px;background:#f4f4f4;border-left:1px solid #fff;border-right:1px solid #9c9c9c;border-bottom:1px solid #9c9c9c;"></div>
<svg class="a" style="left:1132px;top:714px;" width="6" height="9" viewBox="0 0 6 9"><path d="M.5 .5v8L5.200 4.500z" fill="#000"/></svg>
<div class="a" style="left:7px;top:727px;width:1156px;height:1px;background:#a8a8a8;"></div>
<div class="a" style="left:7px;top:728px;width:1156px;height:31px;background:#f0f0f0;"></div>
<div class="a" style="left:7px;top:729px;width:1156px;height:1px;background:#c4c4c4;"></div>
<div class="a" style="left:9px;top:731px;width:52px;height:27px;background:#16f016;"></div>
<div class="t" style="left:12.5px;top:735.7px;font-size:12.3px;color:#0a4a0a;letter-spacing:-0.034px;">Spojeno</div>
<div class="a" style="left:64px;top:731px;width:27px;height:27px;background:#f0f0f0;border:1px solid #d0d0d0;border-right-color:#e4e4e4;border-bottom-color:#e4e4e4;border-radius:1px;"></div>
<div class="t" style="left:69.5px;top:735.7px;font-size:12.3px;">RX</div>
<div class="a" style="left:93px;top:731px;width:28px;height:27px;background:#f0f0f0;border:1px solid #d0d0d0;border-right-color:#e4e4e4;border-bottom-color:#e4e4e4;border-radius:1px;"></div>
<div class="t" style="left:99px;top:735.7px;font-size:12.3px;">TX</div>
<div class="a" style="left:123px;top:731px;width:38px;height:27px;background:#f0f0f0;border:1px solid #d0d0d0;border-right-color:#e4e4e4;border-bottom-color:#e4e4e4;border-radius:1px;"></div>
<div class="t" style="left:127.5px;top:735.7px;font-size:12.3px;">NUM</div>
<div class="a" style="left:163px;top:731px;width:42px;height:27px;background:#f0f0f0;border:1px solid #d0d0d0;border-right-color:#e4e4e4;border-bottom-color:#e4e4e4;border-radius:1px;"></div>
<div class="t" style="left:168px;top:735.7px;font-size:12.3px;color:#b4b4b4;">CAPS</div>
<div class="a" style="left:207px;top:731px;width:116px;height:27px;background:#f0f0f0;border:1px solid #d0d0d0;border-right-color:#e4e4e4;border-bottom-color:#e4e4e4;border-radius:1px;"></div>
<svg class="a" style="left:209px;top:733.5px;" width="23" height="19" viewBox="0 0 23 19"><rect x=".8" y=".8" width="21.400" height="17.400" fill="#f3f3f7" stroke="#555b78" stroke-width="1.500"/><path d="M4 3.700h15M4 15.300h15" stroke="#3a4060" stroke-width="1.100" stroke-dasharray="1.100 2.300"/><path d="M3.700 6.500v7M19.300 6.500v7" stroke="#3a4060" stroke-width="1.100" stroke-dasharray="1.100 2.300"/><path d="M11.200 5v8M7.500 9.800h6.500" stroke="#2a3050" stroke-width="1.500" fill="none"/></svg>
<div class="t" style="left:235.4px;top:735.7px;font-size:12.3px;letter-spacing:-0.052px;">9.1.2012, 11:38</div>
<div class="a" style="left:324.5px;top:731px;width:66px;height:27px;background:#f0f0f0;border:1px solid #d0d0d0;border-right-color:#e4e4e4;border-bottom-color:#e4e4e4;border-radius:1px;"></div>
<svg class="a" style="left:325.5px;top:733.5px;" width="35" height="21" viewBox="0 0 35 21"><defs><radialGradient id="gsu" cx=".5" cy=".5" r=".5"><stop offset="0" stop-color="#ffe04a"/><stop offset=".55" stop-color="#f8b422"/><stop offset=".8" stop-color="#f6c860"/><stop offset="1" stop-color="#fdf3d0"/></radialGradient></defs><rect x=".5" y=".5" width="34" height="20" fill="#fffdf6" stroke="#c9c9c9"/><circle cx="14.500" cy="16" r="11" fill="url(#gsu)"/><rect x="1" y="18" width="33" height="2.500" fill="#b4b4aa"/><path d="M26.500 1.500l5 5.500-1.500 1.300-2.300-2.500V15h-2.400V5.800L23 8.300 21.500 7z" fill="#22a32c" stroke="#148a20" stroke-width=".5"/></svg>
<div class="t" style="left:363.5px;top:735.7px;font-size:12.3px;letter-spacing:-0.210px;">8:45</div>
<div class="a" style="left:393.5px;top:731px;width:73px;height:27px;background:#f0f0f0;border:1px solid #d0d0d0;border-right-color:#e4e4e4;border-bottom-color:#e4e4e4;border-radius:1px;"></div>
<svg class="a" style="left:394.5px;top:733.5px;" width="35" height="21" viewBox="0 0 35 21"><defs><radialGradient id="gsd" cx=".5" cy=".5" r=".5"><stop offset="0" stop-color="#ffe04a"/><stop offset=".55" stop-color="#f8b422"/><stop offset=".8" stop-color="#f6c860"/><stop offset="1" stop-color="#fdf3d0"/></radialGradient></defs><rect x=".5" y=".5" width="34" height="20" fill="#fffdf6" stroke="#c9c9c9"/><circle cx="14.500" cy="16" r="11" fill="url(#gsd)"/><rect x="1" y="18" width="33" height="2.500" fill="#b4b4aa"/><path d="M26.500 15.500l5-5.500-1.500-1.300-2.300 2.500V2h-2.400v9.200L23 8.700 21.500 10z" fill="#c51a1a" stroke="#9a1010" stroke-width=".5"/></svg>
<div class="t" style="left:432.4px;top:735.7px;font-size:12.3px;letter-spacing:0.047px;">17:11</div>
<div class="a" style="left:468px;top:731px;width:82px;height:27px;background:#f0f0f0;border:1px solid #d0d0d0;border-right-color:#e4e4e4;border-bottom-color:#e4e4e4;border-radius:1px;"></div>
<div class="t" style="left:471.6px;top:735.7px;font-size:12.3px;letter-spacing:-0.105px;">Účet: Imperial</div>
<div class="a" style="left:551.5px;top:731px;width:98px;height:27px;background:#f0f0f0;border:1px solid #d0d0d0;border-right-color:#e4e4e4;border-bottom-color:#e4e4e4;border-radius:1px;"></div>
<div class="t" style="left:555.4px;top:735.7px;font-size:12.3px;letter-spacing:-0.131px;">Operátor: Admin</div>
<div class="a" style="left:651.5px;top:731px;width:97px;height:27px;background:#f0f0f0;border:1px solid #d0d0d0;border-right-color:#e4e4e4;border-bottom-color:#e4e4e4;border-radius:1px;"></div>
<div class="t" style="left:655.7px;top:735.7px;font-size:12.3px;letter-spacing:0.017px;">20777 Události</div>
<div class="a" style="left:965.5px;top:731px;width:85.5px;height:27px;background:#f0f0f0;border:1px solid #d0d0d0;border-right-color:#e4e4e4;border-bottom-color:#e4e4e4;border-radius:1px;"></div>
<div class="t" style="left:969px;top:735.7px;font-size:12.3px;letter-spacing:-0.276px;">AC 14,26V</div>
<div class="a" style="left:1052px;top:731px;width:110px;height:27px;background:#f0f0f0;border:1px solid #d0d0d0;border-right-color:#e4e4e4;border-bottom-color:#e4e4e4;border-radius:1px;"></div>
<div class="t" style="left:1056.4px;top:735.7px;font-size:12.3px;letter-spacing:-0.127px;">Baterie 13,39V</div>
<svg class="a" style="left:1029.5px;top:736px;" width="16" height="14" viewBox="0 0 16 14"><rect width="16" height="14" fill="#72de4e"/><rect y="10" width="16" height="4" fill="#a4ec88"/><path d="M2.300 11.800C2.300 1.300 13.700 1.300 13.700 11.800" fill="none" stroke="#183a10" stroke-width="1.500"/><path d="M6.300 12.300L10.300 5.600" stroke="#0a1a06" stroke-width="1.400"/><path d="M11.600 3.400l-.3 3.500-2.700-1.600z" fill="#0a1a06"/></svg>
<svg class="a" style="left:1139.5px;top:736px;" width="16" height="14" viewBox="0 0 16 14"><rect width="16" height="14" fill="#72de4e"/><rect y="10" width="16" height="4" fill="#a4ec88"/><path d="M2.300 11.800C2.300 1.300 13.700 1.300 13.700 11.800" fill="none" stroke="#183a10" stroke-width="1.500"/><path d="M6.300 12.300L10.300 5.600" stroke="#0a1a06" stroke-width="1.400"/><path d="M11.600 3.400l-.3 3.500-2.700-1.600z" fill="#0a1a06"/></svg>
<!-- context menu -->
<div class="a" style="left:192px;top:406px;width:262px;height:259px;background:#f1f1f1;border:1px solid #979797;box-shadow:2px 2px 3px rgba(0,0,0,.45);"></div>
<div class="a" style="left:221px;top:408px;width:1px;height:255px;background:#e2e3e3;"></div>
<div class="a" style="left:222px;top:408px;width:1px;height:255px;background:#fff;"></div>
<div class="a" style="left:194px;top:409px;width:256px;height:22px;background:linear-gradient(180deg,#eff3fb 0,#e4ebf8 100%);border:1px solid #afc8ea;border-radius:3px;"></div>
<div class="a" style="left:223px;top:435px;width:229px;height:1px;background:#e0e0e0;"></div>
<div class="a" style="left:223px;top:436px;width:229px;height:1px;background:#fff;"></div>
<div class="a" style="left:223px;top:465.5px;width:229px;height:1px;background:#e0e0e0;"></div>
<div class="a" style="left:223px;top:466.5px;width:229px;height:1px;background:#fff;"></div>
<div class="a" style="left:223px;top:495.5px;width:229px;height:1px;background:#e0e0e0;"></div>
<div class="a" style="left:223px;top:496.5px;width:229px;height:1px;background:#fff;"></div>
<div class="a" style="left:223px;top:525.5px;width:229px;height:1px;background:#e0e0e0;"></div>
<div class="a" style="left:223px;top:526.5px;width:229px;height:1px;background:#fff;"></div>
<div class="a" style="left:223px;top:555.5px;width:229px;height:1px;background:#e0e0e0;"></div>
<div class="a" style="left:223px;top:556.5px;width:229px;height:1px;background:#fff;"></div>
<div class="a" style="left:223px;top:585px;width:229px;height:1px;background:#e0e0e0;"></div>
<div class="a" style="left:223px;top:586px;width:229px;height:1px;background:#fff;"></div>
<div class="a" style="left:223px;top:637.5px;width:229px;height:1px;background:#e0e0e0;"></div>
<div class="a" style="left:223px;top:638.5px;width:229px;height:1px;background:#fff;"></div>
<div class="t" style="left:227.500px;top:411.5px;font-size:11.5px;color:#000;letter-spacing:0.034px">Vlastnosti</div>
<div class="t" style="left:227.500px;top:441.4px;font-size:11.5px;color:#000;letter-spacing:-0.136px">Prostor zastřežen</div>
<div class="t" style="left:227.500px;top:471.8px;font-size:11.5px;color:#000;letter-spacing:0.158px">Přejmenovat</div>
<div class="t" style="left:227.500px;top:501.3px;font-size:11.5px;color:#000;letter-spacing:-0.474px">Smaž</div>
<div class="t" style="left:227.500px;top:531.4px;font-size:11.5px;color:#000;letter-spacing:0.175px">Zobrazit historii událostí</div>
<div class="t" style="left:227.500px;top:561.6px;font-size:11.5px;color:#000;letter-spacing:-0.063px">Zobrazení závislostí</div>
<div class="t" style="left:227.500px;top:591.5px;font-size:11.5px;color:#000;letter-spacing:0.327px">Přijmout programování</div>
<div class="t" style="left:227.500px;top:613.5px;font-size:11.5px;color:#000;letter-spacing:0.171px">Odeslat programování</div>
<div class="t" style="left:227.500px;top:643.4px;font-size:11.5px;color:#000;letter-spacing:0.071px">Seřadit podle</div>
<svg class="a" style="left:436px;top:446px" width="5" height="8" viewBox="0 0 5 8"><path d="M.5 .5L4.500 4 .5 7.500z" fill="#111"/></svg>
<svg class="a" style="left:436px;top:648px" width="5" height="8" viewBox="0 0 5 8"><path d="M.5 .5L4.500 4 .5 7.500z" fill="#111"/></svg>
<div class="a" style="left:192px;top:389.8px;width:266.5px;height:52.4px;background:transparent;border:3.200px solid #c22a36;"></div>
</div>
</body>
</html>
